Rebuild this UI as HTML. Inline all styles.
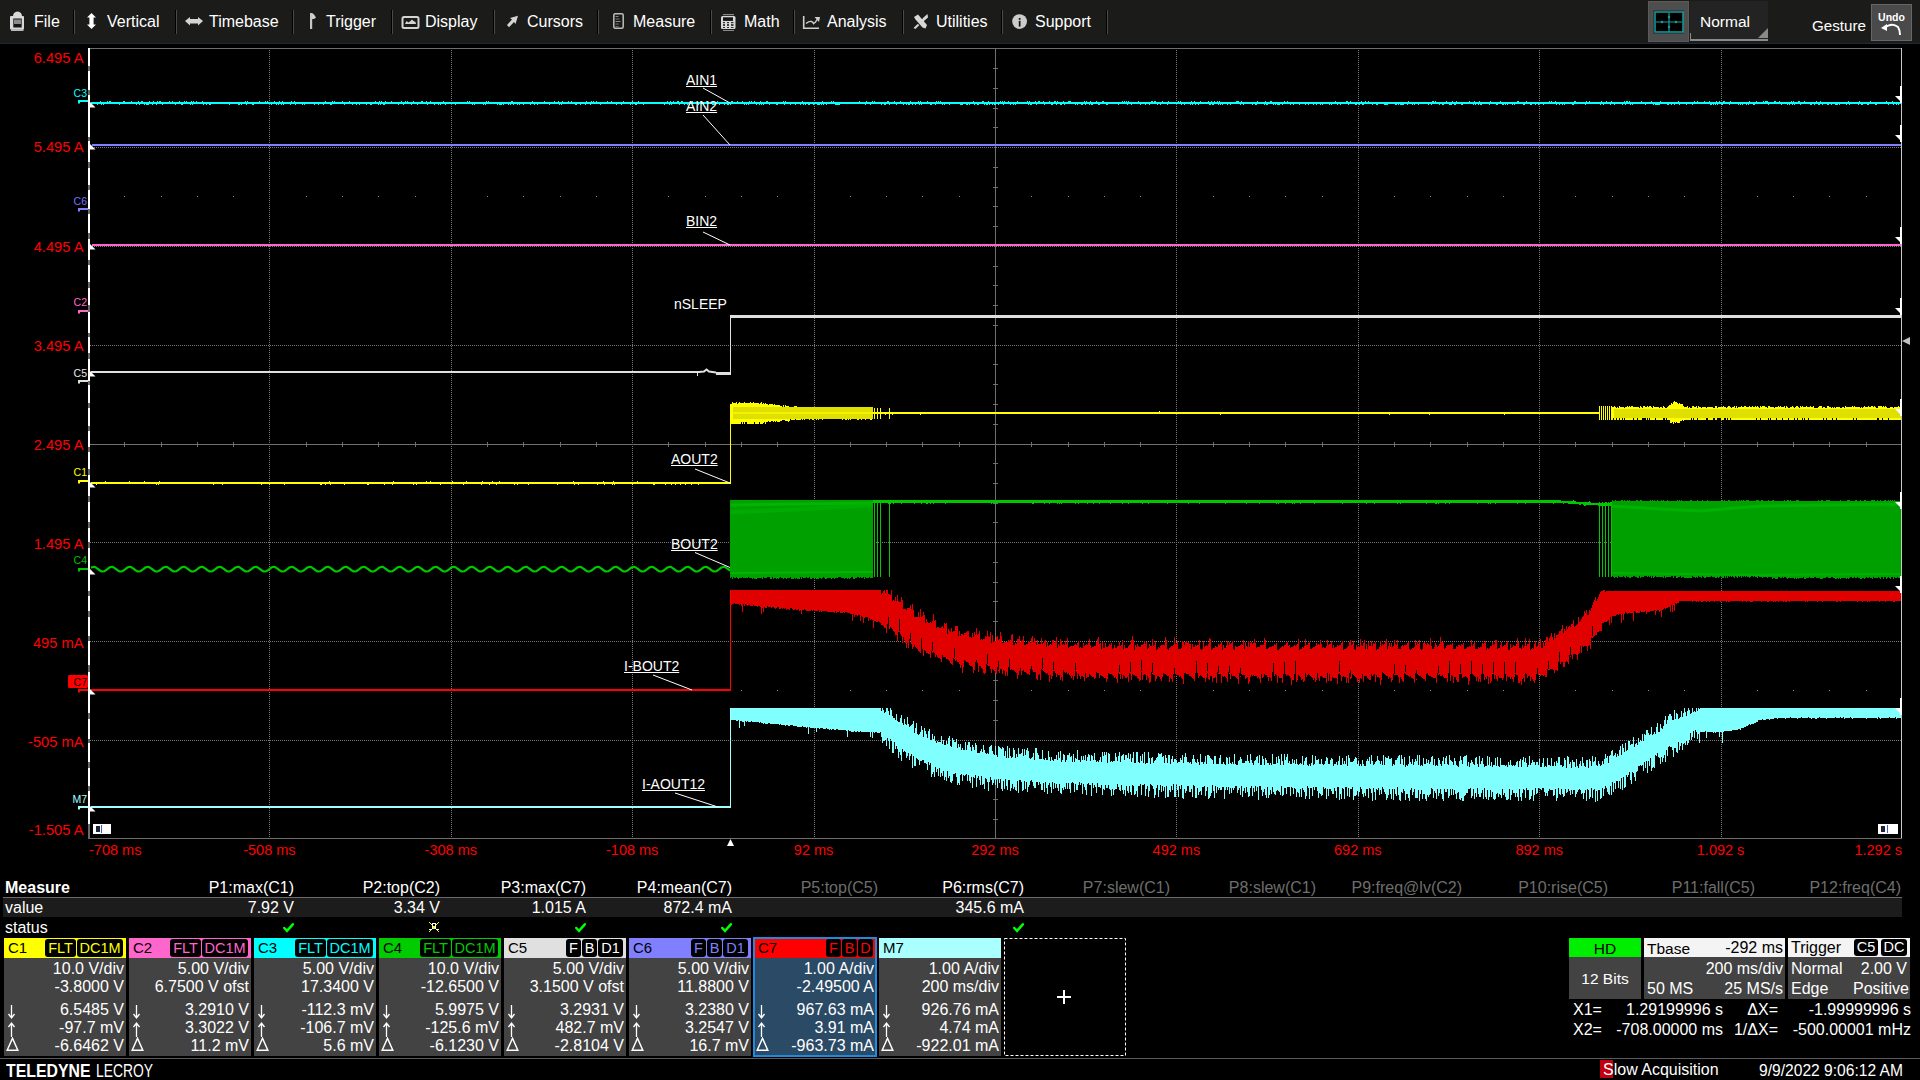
<!DOCTYPE html><html><head><meta charset="utf-8"><style>
*{margin:0;padding:0;box-sizing:border-box}
html,body{width:1920px;height:1080px;background:#000;overflow:hidden;position:relative;font-family:"Liberation Sans",sans-serif;color:#fff}
.a{position:absolute}
.t{position:absolute;white-space:nowrap}
.sep{position:absolute;top:10px;width:2px;height:24px;border-left:1px solid #000;border-right:1px solid #4a4a4a}
.tag{position:absolute;background:#000;border-radius:3px;text-align:center;white-space:nowrap}
</style></head><body><div class="a" style="left:0;top:0;width:1920px;height:43px;background:#1b1b19"></div><div class="a" style="left:0;top:43px;width:1920px;height:1px;background:#1c2a3a"></div><div class="t" style="left:34px;top:12.46px;font-size:16px;line-height:20px;color:#fff;">File</div><div class="t" style="left:107px;top:12.46px;font-size:16px;line-height:20px;color:#fff;">Vertical</div><div class="t" style="left:209px;top:12.46px;font-size:16px;line-height:20px;color:#fff;">Timebase</div><div class="t" style="left:326px;top:12.46px;font-size:16px;line-height:20px;color:#fff;">Trigger</div><div class="t" style="left:425px;top:12.46px;font-size:16px;line-height:20px;color:#fff;">Display</div><div class="t" style="left:527px;top:12.46px;font-size:16px;line-height:20px;color:#fff;">Cursors</div><div class="t" style="left:633px;top:12.46px;font-size:16px;line-height:20px;color:#fff;">Measure</div><div class="t" style="left:744px;top:12.46px;font-size:16px;line-height:20px;color:#fff;">Math</div><div class="t" style="left:827px;top:12.46px;font-size:16px;line-height:20px;color:#fff;">Analysis</div><div class="t" style="left:936px;top:12.46px;font-size:16px;line-height:20px;color:#fff;">Utilities</div><div class="t" style="left:1035px;top:12.46px;font-size:16px;line-height:20px;color:#fff;">Support</div><div class="sep" style="left:73px"></div><div class="sep" style="left:175px"></div><div class="sep" style="left:292px"></div><div class="sep" style="left:391px"></div><div class="sep" style="left:493px"></div><div class="sep" style="left:597px"></div><div class="sep" style="left:710px"></div><div class="sep" style="left:793px"></div><div class="sep" style="left:902px"></div><div class="sep" style="left:1001px"></div><div class="sep" style="left:1106px"></div><svg class="a" style="left:0;top:0" width="1110" height="43" viewBox="0 0 1110 43">
<g fill="#d8d8d8" stroke="none">
<!-- File clipboard -->
<rect x="10" y="16" width="14" height="13.5" rx="1"/>
<path d="M13 16.5 Q13 12 17.5 11.5 Q22 12 22 16.5Z"/>
<rect x="11" y="29" width="12.5" height="2" fill="#b8b8b8"/>
<rect x="13.3" y="18.5" width="8.4" height="9" fill="#151515"/>
<rect x="14" y="19.5" width="7" height="4.5" fill="#8a8a8a"/>
<!-- Vertical double arrow -->
<path d="M91.5 13 L96 17.5 L93.6 17.5 L93.6 24.5 L96 24.5 L91.5 29 L87 24.5 L89.4 24.5 L89.4 17.5 L87 17.5Z" fill="#fff"/>
<!-- Timebase double arrow -->
<path d="M185 21 L190 17 L190 19 L198 19 L198 17 L203 21 L198 25.5 L198 23.5 L190 23.5 L190 25.5Z" fill="#d4d4d4"/>
<!-- Trigger flag -->
<rect x="310" y="13" width="2.2" height="16" fill="#c8c8c8"/>
<path d="M312 13 L314 14.5 L316 17.5 L314 19 L312 19Z" fill="#d0d0d0"/>
<!-- Display -->
<rect x="402.5" y="17" width="16" height="11" rx="1.5" fill="none" stroke="#d4d4d4" stroke-width="2"/>
<path d="M405 24 L406.5 21 L408.5 22.5 L410.5 21 L412 19.5 L413.5 21 L415.5 22 L416 24Z" fill="#d4d4d4"/>
<!-- Cursors arrow -->
<path d="M518 15.8 L510 18 L512 19.5 L507 25 L509 27.2 L514 22 L515.5 24 Z" fill="#d4d4d4"/>
<!-- Measure -->
<rect x="613.8" y="13.7" width="9.4" height="14.5" rx="1.5" fill="none" stroke="#bdbdbd" stroke-width="1.5"/>
<rect x="615.5" y="16" width="3" height="1" fill="#888"/><rect x="615.5" y="18.5" width="4" height="1" fill="#777"/><rect x="615.5" y="21" width="5" height="1" fill="#888"/><rect x="615.5" y="23.5" width="3" height="1" fill="#777"/><rect x="615.5" y="26" width="3" height="1" fill="#666"/>
<!-- Math calculator -->
<rect x="721" y="16" width="14.5" height="13" rx="1.5"/>
<rect x="723" y="17.3" width="10" height="3.6" fill="#151515"/>
<rect x="723" y="22" width="2" height="1.2" fill="#333"/><rect x="727" y="22" width="2" height="1.2" fill="#333"/><rect x="731" y="22" width="2.5" height="1.2" fill="#333"/>
<rect x="723" y="24" width="2" height="2" fill="#444"/><rect x="727" y="24" width="2" height="2" fill="#444"/><rect x="731" y="24" width="2.5" height="2" fill="#444"/>
<rect x="723" y="27" width="2" height="1" fill="#333"/><rect x="727" y="27" width="2" height="1" fill="#333"/><rect x="731" y="27" width="2.5" height="1" fill="#333"/>
<rect x="723" y="14" width="11" height="1.2" fill="#888"/><rect x="723" y="30" width="11" height="1" fill="#888"/>
<!-- Analysis -->
<path d="M803.7 16 V28.3 H819" fill="none" stroke="#d0d0d0" stroke-width="1.6"/>
<path d="M806 23.5 Q809 21 811.5 21.5 Q813 22 813.5 23.5 L815.5 22 L818 18" fill="none" stroke="#d0d0d0" stroke-width="1.4"/>
<path d="M814.5 17 L820 17 L819 22Z" fill="#d0d0d0"/>
<!-- Utilities crossed tools -->
<path d="M914 17 L918 14.5 L927 25 L925.5 28.5 L922.5 27.5 L915.5 19.5Z" fill="#d8d8d8"/>
<path d="M913.5 28 L917.5 24 L919.5 25 L915.5 29Z" fill="#d0d0d0"/>
<path d="M920.5 21 L924 17 L927.5 14 L928 17.5 L925 20 L922.5 22.5Z" fill="#d8d8d8"/>
<!-- Support info -->
<circle cx="1019.6" cy="21.6" r="7.4" fill="#cccccc"/>
<rect x="1018.8" y="18" width="1.7" height="1.8" fill="#111"/>
<rect x="1018.8" y="20.8" width="1.7" height="5.8" fill="#111"/>
</g>
</svg>
<svg class="a" style="left:0;top:0" width="1920" height="1080" viewBox="0 0 1920 1080"><path d="M269.5 50V838M451.5 50V838M632.5 50V838M814.5 50V838M1176.5 50V838M1358.5 50V838M1539.5 50V838M1721.5 50V838M90 147.5H1901M90 246.5H1901M90 345.5H1901M90 542.5H1901M90 641.5H1901M90 740.5H1901" stroke="#787878" stroke-width="1" stroke-dasharray="1 1" shape-rendering="crispEdges"/><path d="M124 196.5h1M161 196.5h1M197 196.5h1M233 196.5h1M306 196.5h1M342 196.5h1M378 196.5h1M415 196.5h1M487 196.5h1M523 196.5h1M560 196.5h1M596 196.5h1M668 196.5h1M705 196.5h1M741 196.5h1M777 196.5h1M850 196.5h1M886 196.5h1M922 196.5h1M959 196.5h1M1031 196.5h1M1068 196.5h1M1104 196.5h1M1140 196.5h1M1213 196.5h1M1249 196.5h1M1285 196.5h1M1322 196.5h1M1394 196.5h1M1430 196.5h1M1467 196.5h1M1503 196.5h1M1575 196.5h1M1612 196.5h1M1648 196.5h1M1684 196.5h1M1757 196.5h1M1793 196.5h1M1829 196.5h1M1866 196.5h1M124 690.5h1M161 690.5h1M197 690.5h1M233 690.5h1M306 690.5h1M342 690.5h1M378 690.5h1M415 690.5h1M487 690.5h1M523 690.5h1M560 690.5h1M596 690.5h1M668 690.5h1M705 690.5h1M741 690.5h1M777 690.5h1M850 690.5h1M886 690.5h1M922 690.5h1M959 690.5h1M1031 690.5h1M1068 690.5h1M1104 690.5h1M1140 690.5h1M1213 690.5h1M1249 690.5h1M1285 690.5h1M1322 690.5h1M1394 690.5h1M1430 690.5h1M1467 690.5h1M1503 690.5h1M1575 690.5h1M1612 690.5h1M1648 690.5h1M1684 690.5h1M1757 690.5h1M1793 690.5h1M1829 690.5h1M1866 690.5h1" stroke="#8a8a8a" stroke-width="1" shape-rendering="crispEdges"/><path d="M995.5 49V838M90 444.5H1901" stroke="#707070" stroke-width="1" shape-rendering="crispEdges"/><path d="M993 68.5H998M993 88.5H998M993 108.5H998M993 127.5H998M993 167.5H998M993 187.5H998M993 206.5H998M993 226.5H998M993 266.5H998M993 285.5H998M993 305.5H998M993 325.5H998M993 364.5H998M993 384.5H998M993 404.5H998M993 424.5H998M993 463.5H998M993 483.5H998M993 503.5H998M993 522.5H998M993 562.5H998M993 582.5H998M993 601.5H998M993 621.5H998M993 661.5H998M993 680.5H998M993 700.5H998M993 720.5H998M993 759.5H998M993 779.5H998M993 799.5H998M993 819.5H998M124.5 442V447M161.5 442V447M197.5 442V447M233.5 442V447M306.5 442V447M342.5 442V447M378.5 442V447M415.5 442V447M487.5 442V447M523.5 442V447M560.5 442V447M596.5 442V447M668.5 442V447M705.5 442V447M741.5 442V447M777.5 442V447M850.5 442V447M886.5 442V447M922.5 442V447M959.5 442V447M1031.5 442V447M1068.5 442V447M1104.5 442V447M1140.5 442V447M1213.5 442V447M1249.5 442V447M1285.5 442V447M1322.5 442V447M1394.5 442V447M1430.5 442V447M1467.5 442V447M1503.5 442V447M1575.5 442V447M1612.5 442V447M1648.5 442V447M1684.5 442V447M1757.5 442V447M1793.5 442V447M1829.5 442V447M1866.5 442V447" stroke="#707070" stroke-width="1" shape-rendering="crispEdges"/><path d="M88 48.5H1902M88 838.5H1902" stroke="#6e6e6e" stroke-width="1" shape-rendering="crispEdges"/><path d="M89 48V838" stroke="#6a6a6a" stroke-width="2" shape-rendering="crispEdges"/><path d="M89 48V66M89 71V90M89 95V137M89 141V162M89 168V185M89 190V209M89 214V233M89 239V260M89 265V282M89 288V305M89 312V333M89 337V353M89 359V381M89 385V403M89 408V426M89 431V447M89 452V469M89 475V496M89 502V522M89 528V542M89 548V591M89 596V611M89 617V636M89 641V665M89 672V713M89 719V739M89 743V762M89 768V786M89 791V824" stroke="#fff" stroke-width="2" shape-rendering="crispEdges"/><path d="M1901.5 48V838" stroke="#c8c8c8" stroke-width="1" shape-rendering="crispEdges"/><rect x="91" y="102" width="1810" height="2" fill="#00ffff" shape-rendering="crispEdges" /><path d="M97.5 104V105M100.5 101V102M101.5 104V105M103.5 104V105M107.5 101V102M109.5 101V102M110.5 101V102M119.5 104V105M123.5 101V102M124.5 101V102M131.5 101V102M136.5 104V105M138.5 101V102M139.5 104V105M141.5 101V102M142.5 101V102M144.5 104V105M146.5 104V105M147.5 104V105M148.5 104V105M149.5 101V102M152.5 104V105M153.5 101V102M156.5 104V105M157.5 101V102M159.5 101V102M160.5 101V102M162.5 104V105M169.5 101V102M172.5 101V102M175.5 104V105M179.5 101V102M181.5 104V105M182.5 104V105M184.5 101V102M186.5 101V102M190.5 104V105M191.5 101V102M192.5 104V105M193.5 101V102M196.5 101V102M202.5 101V102M203.5 104V105M206.5 104V105M209.5 104V105M210.5 104V105M229.5 104V105M238.5 104V105M239.5 104V105M241.5 104V105M245.5 101V102M246.5 104V105M247.5 101V102M252.5 104V105M253.5 104V105M259.5 101V102M265.5 101V102M267.5 101V102M271.5 104V105M274.5 101V102M276.5 104V105M278.5 104V105M279.5 101V102M281.5 104V105M282.5 101V102M283.5 104V105M290.5 104V105M291.5 101V102M294.5 101V102M295.5 104V105M302.5 104V105M304.5 104V105M314.5 104V105M318.5 104V105M323.5 104V105M325.5 101V102M330.5 104V105M331.5 104V105M332.5 101V102M334.5 101V102M342.5 101V102M344.5 104V105M349.5 101V102M352.5 104V105M356.5 104V105M359.5 104V105M366.5 104V105M370.5 104V105M371.5 104V105M375.5 101V102M378.5 104V105M379.5 101V102M380.5 104V105M381.5 101V102M383.5 104V105M384.5 104V105M385.5 101V102M391.5 101V102M398.5 104V105M401.5 101V102M403.5 104V105M405.5 101V102M407.5 101V102M411.5 104V105M413.5 101V102M417.5 104V105M421.5 101V102M422.5 101V102M426.5 101V102M427.5 104V105M430.5 101V102M434.5 104V105M438.5 104V105M440.5 104V105M443.5 101V102M445.5 104V105M455.5 104V105M467.5 101V102M469.5 101V102M472.5 104V105M474.5 104V105M483.5 104V105M485.5 104V105M486.5 101V102M488.5 101V102M497.5 104V105M499.5 104V105M500.5 104V105M501.5 104V105M503.5 104V105M508.5 104V105M510.5 104V105M511.5 101V102M512.5 101V102M513.5 104V105M517.5 104V105M519.5 104V105M523.5 104V105M530.5 104V105M532.5 101V102M534.5 104V105M537.5 104V105M544.5 101V102M549.5 104V105M554.5 101V102M558.5 101V102M559.5 104V105M561.5 104V105M562.5 101V102M568.5 101V102M571.5 101V102M575.5 104V105M576.5 104V105M580.5 104V105M585.5 104V105M586.5 101V102M590.5 104V105M591.5 101V102M593.5 101V102M596.5 101V102M600.5 104V105M607.5 101V102M611.5 101V102M616.5 104V105M621.5 104V105M623.5 101V102M630.5 104V105M632.5 101V102M635.5 104V105M636.5 104V105M638.5 101V102M643.5 104V105M664.5 104V105M667.5 101V102M669.5 104V105M670.5 101V102M671.5 104V105M673.5 101V102M677.5 101V102M678.5 101V102M679.5 104V105M681.5 101V102M682.5 101V102M684.5 104V105M687.5 104V105M689.5 104V105M692.5 101V102M698.5 104V105M700.5 101V102M706.5 101V102M707.5 101V102M712.5 104V105M713.5 104V105M714.5 104V105M717.5 101V102M719.5 104V105M724.5 104V105M727.5 104V105M728.5 104V105M730.5 104V105M731.5 101V102M732.5 101V102M737.5 101V102M742.5 101V102M744.5 104V105M746.5 104V105M748.5 104V105M749.5 101V102M751.5 101V102M754.5 101V102M756.5 104V105M759.5 104V105M760.5 101V102M761.5 104V105M763.5 104V105M766.5 101V102M767.5 101V102M769.5 104V105M776.5 104V105M777.5 104V105M783.5 101V102M784.5 104V105M785.5 101V102M790.5 104V105M795.5 104V105M800.5 104V105M802.5 101V102M803.5 104V105M805.5 104V105M808.5 104V105M809.5 104V105M813.5 104V105M817.5 104V105M818.5 104V105M819.5 104V105M821.5 104V105M822.5 101V102M823.5 104V105M826.5 104V105M831.5 101V102M833.5 101V102M835.5 104V105M836.5 104V105M837.5 104V105M838.5 104V105M839.5 104V105M859.5 101V102M865.5 104V105M866.5 101V102M870.5 104V105M872.5 101V102M874.5 101V102M881.5 104V105M884.5 104V105M885.5 104V105M887.5 101V102M888.5 101V102M889.5 104V105M894.5 101V102M896.5 104V105M900.5 101V102M903.5 104V105M906.5 104V105M908.5 104V105M909.5 104V105M910.5 101V102M912.5 104V105M915.5 104V105M918.5 101V102M919.5 104V105M920.5 101V102M921.5 104V105M927.5 101V102M930.5 104V105M931.5 104V105M935.5 104V105M936.5 101V102M938.5 101V102M940.5 101V102M942.5 104V105M944.5 104V105M949.5 104V105M960.5 104V105M961.5 104V105M962.5 104V105M966.5 104V105M967.5 104V105M969.5 104V105M973.5 101V102M974.5 104V105M977.5 104V105M978.5 104V105M982.5 101V102M983.5 101V102M984.5 104V105M986.5 104V105M987.5 104V105M988.5 101V102M989.5 104V105M992.5 104V105M994.5 104V105M995.5 104V105M998.5 104V105M1000.5 101V102M1002.5 101V102M1003.5 104V105M1004.5 101V102M1008.5 101V102M1010.5 104V105M1013.5 104V105M1015.5 104V105M1017.5 101V102M1027.5 101V102M1028.5 104V105M1029.5 101V102M1030.5 104V105M1031.5 104V105M1035.5 101V102M1036.5 104V105M1038.5 101V102M1039.5 101V102M1043.5 101V102M1044.5 104V105M1049.5 101V102M1051.5 104V105M1052.5 104V105M1054.5 101V102M1055.5 101V102M1056.5 104V105M1057.5 101V102M1060.5 104V105M1061.5 104V105M1063.5 101V102M1064.5 104V105M1068.5 101V102M1069.5 101V102M1070.5 101V102M1075.5 104V105M1077.5 104V105M1081.5 104V105M1082.5 104V105M1084.5 101V102M1085.5 104V105M1086.5 101V102M1089.5 104V105M1090.5 101V102M1091.5 104V105M1092.5 104V105M1096.5 101V102M1098.5 104V105M1099.5 104V105M1102.5 101V102M1103.5 101V102M1106.5 104V105M1107.5 104V105M1118.5 104V105M1122.5 101V102M1124.5 101V102M1126.5 101V102M1127.5 104V105M1128.5 101V102M1131.5 104V105M1138.5 101V102M1140.5 104V105M1145.5 104V105M1149.5 104V105M1151.5 101V102M1152.5 101V102M1154.5 101V102M1155.5 101V102M1157.5 104V105M1160.5 104V105M1162.5 101V102M1167.5 104V105M1168.5 101V102M1178.5 101V102M1180.5 101V102M1181.5 104V105M1184.5 104V105M1190.5 104V105M1191.5 101V102M1192.5 104V105M1194.5 101V102M1195.5 104V105M1198.5 104V105M1200.5 101V102M1208.5 101V102M1209.5 104V105M1210.5 104V105M1211.5 101V102M1212.5 104V105M1213.5 104V105M1214.5 101V102M1217.5 101V102M1218.5 104V105M1219.5 101V102M1220.5 104V105M1222.5 104V105M1227.5 104V105M1230.5 104V105M1236.5 101V102M1237.5 101V102M1238.5 101V102M1240.5 104V105M1241.5 101V102M1243.5 104V105M1252.5 104V105M1255.5 104V105M1256.5 104V105M1257.5 101V102M1264.5 104V105M1265.5 101V102M1266.5 104V105M1267.5 104V105M1270.5 101V102M1271.5 101V102M1273.5 104V105M1275.5 104V105M1277.5 104V105M1278.5 104V105M1279.5 104V105M1282.5 104V105M1284.5 101V102M1287.5 101V102M1290.5 104V105M1293.5 104V105M1299.5 104V105M1305.5 104V105M1308.5 104V105M1313.5 104V105M1316.5 104V105M1320.5 104V105M1322.5 104V105M1329.5 104V105M1331.5 104V105M1335.5 101V102M1337.5 104V105M1340.5 104V105M1346.5 101V102M1347.5 101V102M1348.5 104V105M1350.5 101V102M1355.5 104V105M1356.5 104V105M1359.5 104V105M1361.5 101V102M1362.5 104V105M1363.5 104V105M1365.5 101V102M1368.5 101V102M1372.5 104V105M1376.5 104V105M1377.5 104V105M1384.5 104V105M1385.5 104V105M1386.5 104V105M1387.5 104V105M1395.5 104V105M1396.5 104V105M1398.5 104V105M1400.5 104V105M1401.5 104V105M1402.5 104V105M1403.5 104V105M1407.5 104V105M1408.5 101V102M1412.5 104V105M1414.5 104V105M1418.5 104V105M1428.5 104V105M1431.5 104V105M1432.5 101V102M1433.5 101V102M1435.5 101V102M1439.5 104V105M1442.5 104V105M1443.5 104V105M1446.5 101V102M1449.5 104V105M1450.5 104V105M1451.5 104V105M1452.5 101V102M1454.5 104V105M1455.5 104V105M1456.5 101V102M1461.5 104V105M1462.5 104V105M1469.5 101V102M1473.5 104V105M1474.5 101V102M1475.5 104V105M1478.5 104V105M1479.5 101V102M1480.5 104V105M1481.5 104V105M1489.5 104V105M1490.5 101V102M1496.5 104V105M1497.5 104V105M1500.5 101V102M1502.5 104V105M1503.5 104V105M1505.5 104V105M1507.5 104V105M1512.5 104V105M1514.5 104V105M1517.5 101V102M1518.5 101V102M1523.5 104V105M1524.5 104V105M1526.5 101V102M1530.5 104V105M1531.5 104V105M1535.5 104V105M1538.5 104V105M1543.5 104V105M1549.5 101V102M1551.5 101V102M1555.5 101V102M1556.5 104V105M1559.5 104V105M1562.5 104V105M1564.5 104V105M1572.5 104V105M1573.5 104V105M1574.5 101V102M1575.5 101V102M1585.5 104V105M1586.5 101V102M1589.5 101V102M1600.5 104V105M1601.5 101V102M1603.5 104V105M1606.5 101V102M1610.5 104V105M1611.5 101V102M1614.5 104V105M1622.5 104V105M1624.5 101V102M1625.5 104V105M1626.5 101V102M1627.5 101V102M1629.5 101V102M1630.5 104V105M1632.5 104V105M1641.5 101V102M1645.5 104V105M1651.5 101V102M1653.5 104V105M1655.5 104V105M1656.5 104V105M1657.5 104V105M1658.5 104V105M1659.5 104V105M1660.5 101V102M1667.5 104V105M1668.5 104V105M1671.5 104V105M1674.5 104V105M1678.5 101V102M1679.5 104V105M1686.5 104V105M1692.5 104V105M1694.5 101V102M1697.5 101V102M1704.5 101V102M1709.5 101V102M1710.5 104V105M1711.5 104V105M1713.5 104V105M1715.5 104V105M1716.5 101V102M1717.5 104V105M1719.5 101V102M1721.5 104V105M1722.5 104V105M1723.5 101V102M1724.5 101V102M1729.5 104V105M1730.5 101V102M1738.5 104V105M1740.5 104V105M1742.5 104V105M1746.5 104V105M1748.5 104V105M1749.5 101V102M1753.5 104V105M1754.5 104V105M1756.5 101V102M1763.5 101V102M1765.5 101V102M1766.5 101V102M1767.5 101V102M1768.5 104V105M1774.5 101V102M1775.5 101V102M1779.5 101V102M1781.5 104V105M1787.5 104V105M1789.5 104V105M1791.5 101V102M1792.5 104V105M1793.5 101V102M1794.5 104V105M1798.5 101V102M1799.5 101V102M1800.5 104V105M1804.5 101V102M1810.5 104V105M1811.5 104V105M1814.5 104V105M1816.5 101V102M1818.5 104V105M1819.5 104V105M1820.5 101V102M1822.5 104V105M1827.5 104V105M1828.5 104V105M1831.5 104V105M1835.5 104V105M1836.5 104V105M1837.5 104V105M1839.5 104V105M1846.5 104V105M1848.5 101V102M1849.5 104V105M1858.5 104V105M1859.5 101V102M1861.5 104V105M1862.5 104V105M1867.5 104V105M1868.5 104V105M1870.5 101V102M1875.5 104V105M1876.5 104V105M1886.5 101V102M1888.5 104V105M1892.5 101V102M1893.5 104V105M1896.5 104V105M1898.5 104V105" stroke="#00ffff" stroke-width="1" shape-rendering="crispEdges"/><rect x="92" y="144" width="1809" height="2" fill="#8080ff" shape-rendering="crispEdges" /><rect x="92" y="244" width="1809" height="2" fill="#ff66cc" shape-rendering="crispEdges" /><rect x="91" y="371" width="606" height="2" fill="#e0e0e0" shape-rendering="crispEdges" /><path d="M697 372 L699 372 L704 371.5 L706.5 369.5 L709 371.5 L716 372.5" stroke="#e0e0e0" stroke-width="2" fill="none"/><rect x="697" y="372" width="1" height="4" fill="#e0e0e0" shape-rendering="crispEdges" /><rect x="716" y="372" width="15" height="3" fill="#e0e0e0" shape-rendering="crispEdges" /><rect x="730" y="316" width="1" height="59" fill="#e0e0e0" shape-rendering="crispEdges" /><rect x="730" y="315" width="1171" height="3" fill="#e0e0e0" shape-rendering="crispEdges" /><rect x="91" y="482" width="639" height="2" fill="#ffff00" shape-rendering="crispEdges" /><path d="M96.5 484V485M105.5 481V482M129.5 481V482M144.5 481V482M156.5 484V485M158.5 484V485M159.5 481V482M213.5 484V485M222.5 484V485M261.5 484V485M269.5 484V485M284.5 484V485M320.5 484V485M321.5 484V485M325.5 484V485M329.5 481V482M330.5 484V485M344.5 484V485M367.5 484V485M368.5 484V485M384.5 484V485M392.5 484V485M393.5 481V482M413.5 484V485M416.5 484V485M426.5 481V482M430.5 481V482M440.5 484V485M452.5 481V482M463.5 484V485M466.5 481V482M481.5 484V485M482.5 481V482M489.5 484V485M492.5 481V482M496.5 484V485M499.5 481V482M514.5 484V485M517.5 484V485M528.5 484V485M557.5 484V485M573.5 481V482M574.5 484V485M578.5 484V485M597.5 484V485M603.5 481V482M604.5 484V485M612.5 484V485M613.5 481V482M614.5 484V485M632.5 484V485M637.5 481V482M653.5 484V485M654.5 484V485M665.5 484V485M671.5 484V485M675.5 484V485M680.5 484V485M685.5 484V485M691.5 484V485M698.5 484V485" stroke="#ffff00" stroke-width="1" shape-rendering="crispEdges"/><rect x="730" y="404" width="1" height="80" fill="#ffff00" shape-rendering="crispEdges" /><path d="M731.5 404V424M732.5 402V424M733.5 403V424M734.5 403V424M735.5 403V424M736.5 402V424M737.5 404V424M738.5 403V424M739.5 402V424M740.5 403V424M741.5 403V422M742.5 403V424M743.5 403V422M744.5 402V424M745.5 403V422M746.5 403V422M747.5 403V424M748.5 403V424M749.5 403V424M750.5 402V424M751.5 403V424M752.5 403V424M753.5 402V424M754.5 403V422M755.5 403V424M756.5 403V424M757.5 403V424M758.5 403V424M759.5 404V422M760.5 403V424M761.5 402V424M762.5 404V424M763.5 403V423M764.5 404V422M765.5 403V424M766.5 404V422M767.5 404V422M768.5 405V421M769.5 404V422M770.5 404V422M771.5 404V421M772.5 404V421M773.5 405V422M774.5 404V421M775.5 405V422M776.5 405V421M777.5 405V422M778.5 405V422M779.5 405V422M780.5 406V421M781.5 406V421M782.5 407V420M783.5 405V420M784.5 407V420M785.5 405V421M786.5 406V421M787.5 406V421M788.5 406V422M789.5 407V421M790.5 407V419M791.5 408V420M792.5 408V420M793.5 407V420M794.5 406V420M795.5 406V419M796.5 406V420M797.5 408V420M798.5 408V420M799.5 409V420M800.5 407V420M801.5 409V419M802.5 407V420M803.5 408V419M804.5 408V420M805.5 408V418M806.5 408V418M807.5 408V418M808.5 409V418M809.5 409V420M810.5 408V419M811.5 407V419M812.5 407V420M813.5 408V420M814.5 409V419M815.5 408V419M816.5 408V420M817.5 408V419M818.5 408V420M819.5 408V419M820.5 408V419M821.5 408V418M822.5 408V420M823.5 407V419M824.5 407V419M825.5 407V418M826.5 408V418M827.5 408V419M828.5 408V418M829.5 407V418M830.5 408V419M831.5 409V419M832.5 407V419M833.5 408V419M834.5 408V419M835.5 408V419M836.5 408V419M837.5 408V419M838.5 409V418M839.5 407V419M840.5 408V419M841.5 408V419M842.5 408V420M843.5 408V419M844.5 408V419M845.5 408V420M846.5 408V420M847.5 408V419M848.5 408V420M849.5 407V419M850.5 408V420M851.5 408V419M852.5 408V419M853.5 409V419M854.5 409V419M855.5 408V419M856.5 408V419M857.5 408V420M858.5 408V420M859.5 408V418M860.5 408V419M861.5 408V420M862.5 409V419M863.5 408V419M864.5 408V419M865.5 407V420M866.5 408V418M867.5 407V419M868.5 407V419M869.5 407V418M870.5 408V420M871.5 408V420M872.5 408V419" stroke="#ffff00" stroke-width="1" fill="none" shape-rendering="crispEdges" /><rect x="733" y="407" width="140" height="12" fill="#e0e000" shape-rendering="crispEdges" /><rect x="731" y="412" width="142" height="2" fill="#ffff00" shape-rendering="crispEdges" opacity="0.6"/><rect x="874" y="408" width="1" height="11" fill="#ffff00" shape-rendering="crispEdges" /><rect x="877" y="408" width="1" height="11" fill="#ffff00" shape-rendering="crispEdges" /><rect x="880" y="408" width="1" height="11" fill="#ffff00" shape-rendering="crispEdges" /><rect x="889" y="408" width="1" height="11" fill="#ffff00" shape-rendering="crispEdges" /><rect x="873" y="412" width="726" height="2" fill="#ffff00" shape-rendering="crispEdges" /><path d="M885.5 414V415M892.5 414V415M920.5 414V415M1159.5 411V412M1220.5 414V415M1389.5 414V415M1429.5 414V415M1504.5 414V415" stroke="#ffff00" stroke-width="1" shape-rendering="crispEdges"/><rect x="1599" y="406" width="1" height="14" fill="#ffff00" shape-rendering="crispEdges" /><rect x="1601" y="406" width="1" height="14" fill="#ffff00" shape-rendering="crispEdges" /><rect x="1603" y="406" width="1" height="14" fill="#ffff00" shape-rendering="crispEdges" /><rect x="1605" y="406" width="1" height="14" fill="#ffff00" shape-rendering="crispEdges" /><rect x="1607" y="406" width="1" height="14" fill="#ffff00" shape-rendering="crispEdges" /><rect x="1609" y="406" width="1" height="14" fill="#ffff00" shape-rendering="crispEdges" /><rect x="1611" y="406" width="1" height="14" fill="#ffff00" shape-rendering="crispEdges" /><path d="M1612.5 407V420M1613.5 407V418M1614.5 406V420M1615.5 407V420M1616.5 408V418M1617.5 407V420M1618.5 408V420M1619.5 406V418M1620.5 407V420M1621.5 407V420M1622.5 407V418M1623.5 407V420M1624.5 408V418M1625.5 407V420M1626.5 407V420M1627.5 406V420M1628.5 407V420M1629.5 406V420M1630.5 407V420M1631.5 406V420M1632.5 406V420M1633.5 407V418M1634.5 407V420M1635.5 407V420M1636.5 407V420M1637.5 407V418M1638.5 407V420M1639.5 408V420M1640.5 406V420M1641.5 407V420M1642.5 408V418M1643.5 406V418M1644.5 406V418M1645.5 407V418M1646.5 407V420M1647.5 406V418M1648.5 407V420M1649.5 406V418M1650.5 406V420M1651.5 407V420M1652.5 408V420M1653.5 406V420M1654.5 407V420M1655.5 407V418M1656.5 407V420M1657.5 407V420M1658.5 407V420M1659.5 408V420M1660.5 407V420M1661.5 407V420M1662.5 408V420M1663.5 406V418M1664.5 407V418M1665.5 408V420M1666.5 408V418M1667.5 407V420M1668.5 406V420M1669.5 405V420M1670.5 405V423M1671.5 403V423M1672.5 404V422M1673.5 402V424M1674.5 401V422M1675.5 402V423M1676.5 402V422M1677.5 403V423M1678.5 404V423M1679.5 403V423M1680.5 404V421M1681.5 404V421M1682.5 404V420M1683.5 406V421M1684.5 407V420M1685.5 407V420M1686.5 407V420M1687.5 406V420M1688.5 408V420M1689.5 407V420M1690.5 408V420M1691.5 408V418M1692.5 406V420M1693.5 406V418M1694.5 407V420M1695.5 407V420M1696.5 406V420M1697.5 408V418M1698.5 406V420M1699.5 407V420M1700.5 407V420M1701.5 408V420M1702.5 407V420M1703.5 407V420M1704.5 407V420M1705.5 407V420M1706.5 408V418M1707.5 407V418M1708.5 407V420M1709.5 407V420M1710.5 407V420M1711.5 407V420M1712.5 407V420M1713.5 408V418M1714.5 408V418M1715.5 406V420M1716.5 406V420M1717.5 408V418M1718.5 407V418M1719.5 407V418M1720.5 407V418M1721.5 407V420M1722.5 407V420M1723.5 406V420M1724.5 407V418M1725.5 407V418M1726.5 408V420M1727.5 407V418M1728.5 406V420M1729.5 406V420M1730.5 407V418M1731.5 408V420M1732.5 407V420M1733.5 407V420M1734.5 406V420M1735.5 408V420M1736.5 406V420M1737.5 408V420M1738.5 407V420M1739.5 407V420M1740.5 407V420M1741.5 406V420M1742.5 407V420M1743.5 407V420M1744.5 406V420M1745.5 406V420M1746.5 407V420M1747.5 407V420M1748.5 407V420M1749.5 406V420M1750.5 407V420M1751.5 407V420M1752.5 406V420M1753.5 407V420M1754.5 407V420M1755.5 406V420M1756.5 407V418M1757.5 406V420M1758.5 407V420M1759.5 408V420M1760.5 406V418M1761.5 407V420M1762.5 406V420M1763.5 406V420M1764.5 406V420M1765.5 407V420M1766.5 407V420M1767.5 408V420M1768.5 406V418M1769.5 406V420M1770.5 407V418M1771.5 407V420M1772.5 407V420M1773.5 407V420M1774.5 408V420M1775.5 407V420M1776.5 407V418M1777.5 407V420M1778.5 406V420M1779.5 407V420M1780.5 406V420M1781.5 407V420M1782.5 407V418M1783.5 407V420M1784.5 406V420M1785.5 408V420M1786.5 406V420M1787.5 407V420M1788.5 408V418M1789.5 408V420M1790.5 407V420M1791.5 407V420M1792.5 406V420M1793.5 407V420M1794.5 408V418M1795.5 407V420M1796.5 406V420M1797.5 406V418M1798.5 407V420M1799.5 408V420M1800.5 406V420M1801.5 407V420M1802.5 406V418M1803.5 407V420M1804.5 407V418M1805.5 407V420M1806.5 406V420M1807.5 407V420M1808.5 407V418M1809.5 407V420M1810.5 406V420M1811.5 407V420M1812.5 407V420M1813.5 406V420M1814.5 408V420M1815.5 408V420M1816.5 408V420M1817.5 408V420M1818.5 407V420M1819.5 406V420M1820.5 406V420M1821.5 406V420M1822.5 408V420M1823.5 407V418M1824.5 407V420M1825.5 408V420M1826.5 408V418M1827.5 406V420M1828.5 406V420M1829.5 407V420M1830.5 407V420M1831.5 408V420M1832.5 407V418M1833.5 408V420M1834.5 407V420M1835.5 408V420M1836.5 407V418M1837.5 407V420M1838.5 407V420M1839.5 407V420M1840.5 408V420M1841.5 408V420M1842.5 407V420M1843.5 407V420M1844.5 408V420M1845.5 406V420M1846.5 407V420M1847.5 407V420M1848.5 407V420M1849.5 407V420M1850.5 407V420M1851.5 407V420M1852.5 406V420M1853.5 407V418M1854.5 406V420M1855.5 407V420M1856.5 407V418M1857.5 407V420M1858.5 407V420M1859.5 407V420M1860.5 408V420M1861.5 407V420M1862.5 408V420M1863.5 407V420M1864.5 406V420M1865.5 407V420M1866.5 407V420M1867.5 407V420M1868.5 406V420M1869.5 407V420M1870.5 407V420M1871.5 406V420M1872.5 406V420M1873.5 407V420M1874.5 406V420M1875.5 407V420M1876.5 408V420M1877.5 408V418M1878.5 406V418M1879.5 406V420M1880.5 406V420M1881.5 406V420M1882.5 407V418M1883.5 406V420M1884.5 407V420M1885.5 406V420M1886.5 407V420M1887.5 408V420M1888.5 408V418M1889.5 408V420M1890.5 407V420M1891.5 407V420M1892.5 407V420M1893.5 408V420M1894.5 407V420M1895.5 407V420M1896.5 407V420M1897.5 407V420M1898.5 406V420M1899.5 407V420M1900.5 406V420" stroke="#ffff00" stroke-width="1" fill="none" shape-rendering="crispEdges" /><rect x="1614" y="409" width="287" height="9" fill="#e0e000" shape-rendering="crispEdges" /><polyline points="91,567.8 92,567.3 93,567.0 94,566.9 95,567.1 96,567.6 97,568.3 98,569.0 99,569.8 100,570.6 101,571.1 102,571.4 103,571.5 104,571.3 105,570.8 106,570.1 107,569.4 108,568.6 109,567.8 110,567.3 111,567.0 112,566.9 113,567.1 114,567.6 115,568.3 116,569.0 117,569.8 118,570.6 119,571.1 120,571.4 121,571.5 122,571.3 123,570.8 124,570.1 125,569.4 126,568.6 127,567.8 128,567.3 129,567.0 130,566.9 131,567.1 132,567.6 133,568.3 134,569.0 135,569.8 136,570.6 137,571.1 138,571.4 139,571.5 140,571.3 141,570.8 142,570.1 143,569.4 144,568.6 145,567.8 146,567.3 147,567.0 148,566.9 149,567.1 150,567.6 151,568.3 152,569.0 153,569.8 154,570.6 155,571.1 156,571.4 157,571.5 158,571.3 159,570.8 160,570.1 161,569.4 162,568.6 163,567.8 164,567.3 165,567.0 166,566.9 167,567.1 168,567.6 169,568.3 170,569.0 171,569.8 172,570.6 173,571.1 174,571.4 175,571.5 176,571.3 177,570.8 178,570.1 179,569.4 180,568.6 181,567.8 182,567.3 183,567.0 184,566.9 185,567.1 186,567.6 187,568.3 188,569.0 189,569.8 190,570.6 191,571.1 192,571.4 193,571.5 194,571.3 195,570.8 196,570.1 197,569.4 198,568.6 199,567.8 200,567.3 201,567.0 202,566.9 203,567.1 204,567.6 205,568.3 206,569.0 207,569.8 208,570.6 209,571.1 210,571.4 211,571.5 212,571.3 213,570.8 214,570.1 215,569.4 216,568.6 217,567.8 218,567.3 219,567.0 220,566.9 221,567.1 222,567.6 223,568.3 224,569.0 225,569.8 226,570.6 227,571.1 228,571.4 229,571.5 230,571.3 231,570.8 232,570.1 233,569.4 234,568.6 235,567.8 236,567.3 237,567.0 238,566.9 239,567.1 240,567.6 241,568.3 242,569.0 243,569.8 244,570.6 245,571.1 246,571.4 247,571.5 248,571.3 249,570.8 250,570.1 251,569.4 252,568.6 253,567.8 254,567.3 255,567.0 256,566.9 257,567.1 258,567.6 259,568.3 260,569.0 261,569.8 262,570.6 263,571.1 264,571.4 265,571.5 266,571.3 267,570.8 268,570.1 269,569.4 270,568.6 271,567.8 272,567.3 273,567.0 274,566.9 275,567.1 276,567.6 277,568.3 278,569.0 279,569.8 280,570.6 281,571.1 282,571.4 283,571.5 284,571.3 285,570.8 286,570.1 287,569.4 288,568.6 289,567.8 290,567.3 291,567.0 292,566.9 293,567.1 294,567.6 295,568.3 296,569.0 297,569.8 298,570.6 299,571.1 300,571.4 301,571.5 302,571.3 303,570.8 304,570.1 305,569.4 306,568.6 307,567.8 308,567.3 309,567.0 310,566.9 311,567.1 312,567.6 313,568.3 314,569.0 315,569.8 316,570.6 317,571.1 318,571.4 319,571.5 320,571.3 321,570.8 322,570.1 323,569.4 324,568.6 325,567.8 326,567.3 327,567.0 328,566.9 329,567.1 330,567.6 331,568.3 332,569.0 333,569.8 334,570.6 335,571.1 336,571.4 337,571.5 338,571.3 339,570.8 340,570.1 341,569.4 342,568.6 343,567.8 344,567.3 345,567.0 346,566.9 347,567.1 348,567.6 349,568.3 350,569.0 351,569.8 352,570.6 353,571.1 354,571.4 355,571.5 356,571.3 357,570.8 358,570.1 359,569.4 360,568.6 361,567.8 362,567.3 363,567.0 364,566.9 365,567.1 366,567.6 367,568.3 368,569.0 369,569.8 370,570.6 371,571.1 372,571.4 373,571.5 374,571.3 375,570.8 376,570.1 377,569.4 378,568.6 379,567.8 380,567.3 381,567.0 382,566.9 383,567.1 384,567.6 385,568.3 386,569.0 387,569.8 388,570.6 389,571.1 390,571.4 391,571.5 392,571.3 393,570.8 394,570.1 395,569.4 396,568.6 397,567.8 398,567.3 399,567.0 400,566.9 401,567.1 402,567.6 403,568.3 404,569.0 405,569.8 406,570.6 407,571.1 408,571.4 409,571.5 410,571.3 411,570.8 412,570.1 413,569.4 414,568.6 415,567.8 416,567.3 417,567.0 418,566.9 419,567.1 420,567.6 421,568.3 422,569.0 423,569.8 424,570.6 425,571.1 426,571.4 427,571.5 428,571.3 429,570.8 430,570.1 431,569.4 432,568.6 433,567.8 434,567.3 435,567.0 436,566.9 437,567.1 438,567.6 439,568.3 440,569.0 441,569.8 442,570.6 443,571.1 444,571.4 445,571.5 446,571.3 447,570.8 448,570.1 449,569.4 450,568.6 451,567.8 452,567.3 453,567.0 454,566.9 455,567.1 456,567.6 457,568.3 458,569.0 459,569.8 460,570.6 461,571.1 462,571.4 463,571.5 464,571.3 465,570.8 466,570.1 467,569.4 468,568.6 469,567.8 470,567.3 471,567.0 472,566.9 473,567.1 474,567.6 475,568.3 476,569.0 477,569.8 478,570.6 479,571.1 480,571.4 481,571.5 482,571.3 483,570.8 484,570.1 485,569.4 486,568.6 487,567.8 488,567.3 489,567.0 490,566.9 491,567.1 492,567.6 493,568.3 494,569.0 495,569.8 496,570.6 497,571.1 498,571.4 499,571.5 500,571.3 501,570.8 502,570.1 503,569.4 504,568.6 505,567.8 506,567.3 507,567.0 508,566.9 509,567.1 510,567.6 511,568.3 512,569.0 513,569.8 514,570.6 515,571.1 516,571.4 517,571.5 518,571.3 519,570.8 520,570.1 521,569.4 522,568.6 523,567.8 524,567.3 525,567.0 526,566.9 527,567.1 528,567.6 529,568.3 530,569.0 531,569.8 532,570.6 533,571.1 534,571.4 535,571.5 536,571.3 537,570.8 538,570.1 539,569.4 540,568.6 541,567.8 542,567.3 543,567.0 544,566.9 545,567.1 546,567.6 547,568.3 548,569.0 549,569.8 550,570.6 551,571.1 552,571.4 553,571.5 554,571.3 555,570.8 556,570.1 557,569.4 558,568.6 559,567.8 560,567.3 561,567.0 562,566.9 563,567.1 564,567.6 565,568.3 566,569.0 567,569.8 568,570.6 569,571.1 570,571.4 571,571.5 572,571.3 573,570.8 574,570.1 575,569.4 576,568.6 577,567.8 578,567.3 579,567.0 580,566.9 581,567.1 582,567.6 583,568.3 584,569.0 585,569.8 586,570.6 587,571.1 588,571.4 589,571.5 590,571.3 591,570.8 592,570.1 593,569.4 594,568.6 595,567.8 596,567.3 597,567.0 598,566.9 599,567.1 600,567.6 601,568.3 602,569.0 603,569.8 604,570.6 605,571.1 606,571.4 607,571.5 608,571.3 609,570.8 610,570.1 611,569.4 612,568.6 613,567.8 614,567.3 615,567.0 616,566.9 617,567.1 618,567.6 619,568.3 620,569.0 621,569.8 622,570.6 623,571.1 624,571.4 625,571.5 626,571.3 627,570.8 628,570.1 629,569.4 630,568.6 631,567.8 632,567.3 633,567.0 634,566.9 635,567.1 636,567.6 637,568.3 638,569.0 639,569.8 640,570.6 641,571.1 642,571.4 643,571.5 644,571.3 645,570.8 646,570.1 647,569.4 648,568.6 649,567.8 650,567.3 651,567.0 652,566.9 653,567.1 654,567.6 655,568.3 656,569.0 657,569.8 658,570.6 659,571.1 660,571.4 661,571.5 662,571.3 663,570.8 664,570.1 665,569.4 666,568.6 667,567.8 668,567.3 669,567.0 670,566.9 671,567.1 672,567.6 673,568.3 674,569.0 675,569.8 676,570.6 677,571.1 678,571.4 679,571.5 680,571.3 681,570.8 682,570.1 683,569.4 684,568.6 685,567.8 686,567.3 687,567.0 688,566.9 689,567.1 690,567.6 691,568.3 692,569.0 693,569.8 694,570.6 695,571.1 696,571.4 697,571.5 698,571.3 699,570.8 700,570.1 701,569.4 702,568.6 703,567.8 704,567.3 705,567.0 706,566.9 707,567.1 708,567.6 709,568.3 710,569.0 711,569.8 712,570.6 713,571.1 714,571.4 715,571.5 716,571.3 717,570.8 718,570.1 719,569.4 720,568.6 721,567.8 722,567.3 723,567.0 724,566.9 725,567.1 726,567.6 727,568.3 728,569.0 729,569.8 730,570.6" stroke="#00c800" stroke-width="2.2" fill="none"/><path d="M730.5 500V578M731.5 500V577M732.5 500V579M733.5 500V577M734.5 500V578M735.5 500V578M736.5 500V577M737.5 500V578M738.5 500V579M739.5 500V578M740.5 500V578M741.5 500V578M742.5 500V577M743.5 500V578M744.5 500V578M745.5 500V578M746.5 500V578M747.5 500V578M748.5 500V577M749.5 500V578M750.5 500V578M751.5 500V578M752.5 500V579M753.5 500V578M754.5 500V579M755.5 500V579M756.5 500V579M757.5 500V578M758.5 500V578M759.5 500V578M760.5 500V578M761.5 500V578M762.5 500V579M763.5 500V577M764.5 500V578M765.5 500V578M766.5 500V578M767.5 500V577M768.5 500V577M769.5 500V577M770.5 500V579M771.5 500V579M772.5 500V577M773.5 500V579M774.5 500V578M775.5 500V578M776.5 500V579M777.5 500V578M778.5 500V579M779.5 500V578M780.5 500V577M781.5 500V578M782.5 500V578M783.5 500V579M784.5 500V578M785.5 500V578M786.5 500V579M787.5 500V578M788.5 500V578M789.5 500V578M790.5 500V577M791.5 500V579M792.5 500V579M793.5 500V579M794.5 500V578M795.5 500V579M796.5 500V578M797.5 500V579M798.5 500V579M799.5 500V579M800.5 500V577M801.5 500V579M802.5 500V577M803.5 500V578M804.5 500V578M805.5 500V578M806.5 500V577M807.5 500V578M808.5 500V578M809.5 500V577M810.5 500V579M811.5 500V579M812.5 500V578M813.5 500V578M814.5 500V578M815.5 500V578M816.5 500V579M817.5 500V579M818.5 500V579M819.5 500V578M820.5 500V578M821.5 500V579M822.5 500V578M823.5 500V577M824.5 500V578M825.5 500V579M826.5 500V579M827.5 500V578M828.5 500V578M829.5 500V578M830.5 500V578M831.5 500V579M832.5 500V578M833.5 500V578M834.5 500V579M835.5 500V578M836.5 500V578M837.5 500V578M838.5 500V577M839.5 500V577M840.5 500V577M841.5 500V578M842.5 500V578M843.5 500V578M844.5 500V579M845.5 500V578M846.5 500V578M847.5 500V579M848.5 500V578M849.5 500V579M850.5 500V578M851.5 500V577M852.5 500V577M853.5 500V579M854.5 500V579M855.5 500V578M856.5 500V578M857.5 500V577M858.5 500V577M859.5 500V578M860.5 500V577M861.5 500V578M862.5 500V578M863.5 500V577M864.5 500V579M865.5 500V577M866.5 500V578M867.5 500V578M868.5 500V578M869.5 500V577M870.5 500V578M871.5 500V578M872.5 500V578" stroke="#00a000" stroke-width="1" fill="none" shape-rendering="crispEdges" /><path d="M731 505 L873 503" stroke="#00b800" stroke-width="3" fill="none" opacity="0.9"/><path d="M731 512 Q 800 510 873 505" stroke="#00b400" stroke-width="4" fill="none" opacity="0.6"/><path d="M731 573 L873 572" stroke="#00c000" stroke-width="2" fill="none" opacity="0.7"/><rect x="874" y="501" width="1" height="76" fill="#00c800" shape-rendering="crispEdges" /><rect x="877" y="501" width="1" height="76" fill="#00c800" shape-rendering="crispEdges" /><rect x="880" y="501" width="1" height="76" fill="#00c800" shape-rendering="crispEdges" /><rect x="889" y="501" width="1" height="76" fill="#00c800" shape-rendering="crispEdges" /><path d="M873.5 500V503M874.5 500V504M875.5 500V503M876.5 500V503M877.5 500V503M878.5 500V503M879.5 500V503M880.5 500V503M881.5 500V503M882.5 500V503M883.5 500V503M884.5 500V503M885.5 500V503M886.5 500V503M887.5 500V503M888.5 500V504M889.5 500V503M890.5 500V504M891.5 500V503M892.5 500V503M893.5 500V504M894.5 500V503M895.5 500V503M896.5 500V503M897.5 500V503M898.5 500V503M899.5 500V503M900.5 500V503M901.5 500V504M902.5 500V503M903.5 500V503M904.5 500V503M905.5 500V503M906.5 500V503M907.5 500V503M908.5 500V503M909.5 500V503M910.5 500V503M911.5 500V503M912.5 500V503M913.5 500V503M914.5 500V504M915.5 500V503M916.5 500V503M917.5 500V503M918.5 500V503M919.5 500V503M920.5 500V503M921.5 500V504M922.5 500V503M923.5 500V503M924.5 500V503M925.5 500V503M926.5 500V504M927.5 500V504M928.5 500V503M929.5 500V503M930.5 500V504M931.5 500V503M932.5 500V503M933.5 500V504M934.5 500V503M935.5 500V503M936.5 500V503M937.5 500V503M938.5 500V503M939.5 500V503M940.5 500V503M941.5 500V503M942.5 500V503M943.5 500V503M944.5 500V503M945.5 500V504M946.5 500V503M947.5 500V503M948.5 500V503M949.5 500V503M950.5 500V503M951.5 500V503M952.5 500V503M953.5 500V503M954.5 500V503M955.5 500V503M956.5 500V503M957.5 500V503M958.5 500V503M959.5 500V503M960.5 500V503M961.5 500V503M962.5 500V503M963.5 500V503M964.5 500V503M965.5 500V503M966.5 500V503M967.5 500V503M968.5 500V503M969.5 500V503M970.5 500V503M971.5 500V503M972.5 500V503M973.5 500V503M974.5 500V503M975.5 500V503M976.5 500V503M977.5 500V503M978.5 500V503M979.5 500V503M980.5 500V503M981.5 500V503M982.5 500V503M983.5 500V503M984.5 500V503M985.5 500V503M986.5 500V503M987.5 500V503M988.5 500V503M989.5 500V503M990.5 500V503M991.5 500V504M992.5 500V503M993.5 500V503M994.5 500V504M995.5 500V503M996.5 500V503M997.5 500V503M998.5 500V503M999.5 500V503M1000.5 500V503M1001.5 500V503M1002.5 500V503M1003.5 500V503M1004.5 500V503M1005.5 500V503M1006.5 500V503M1007.5 500V503M1008.5 500V503M1009.5 500V503M1010.5 500V503M1011.5 500V503M1012.5 500V503M1013.5 500V503M1014.5 500V503M1015.5 500V503M1016.5 500V503M1017.5 500V503M1018.5 500V503M1019.5 500V503M1020.5 500V503M1021.5 500V503M1022.5 500V503M1023.5 500V503M1024.5 500V503M1025.5 500V503M1026.5 500V503M1027.5 500V503M1028.5 500V503M1029.5 500V503M1030.5 500V503M1031.5 500V503M1032.5 500V504M1033.5 500V504M1034.5 500V503M1035.5 500V503M1036.5 500V503M1037.5 500V503M1038.5 500V503M1039.5 500V503M1040.5 500V503M1041.5 500V503M1042.5 500V503M1043.5 500V503M1044.5 500V504M1045.5 500V503M1046.5 500V503M1047.5 500V503M1048.5 500V503M1049.5 500V504M1050.5 500V503M1051.5 500V503M1052.5 500V503M1053.5 500V503M1054.5 500V503M1055.5 500V503M1056.5 500V503M1057.5 500V504M1058.5 500V503M1059.5 500V504M1060.5 500V503M1061.5 500V504M1062.5 500V503M1063.5 500V503M1064.5 500V503M1065.5 500V503M1066.5 500V503M1067.5 500V503M1068.5 500V503M1069.5 500V503M1070.5 500V503M1071.5 500V503M1072.5 500V503M1073.5 500V503M1074.5 500V503M1075.5 500V504M1076.5 500V503M1077.5 500V503M1078.5 500V504M1079.5 500V503M1080.5 500V503M1081.5 500V503M1082.5 500V503M1083.5 500V503M1084.5 500V503M1085.5 500V503M1086.5 500V503M1087.5 500V504M1088.5 500V503M1089.5 500V503M1090.5 500V503M1091.5 500V503M1092.5 500V503M1093.5 500V504M1094.5 500V503M1095.5 500V503M1096.5 500V503M1097.5 500V503M1098.5 500V503M1099.5 500V504M1100.5 500V503M1101.5 500V503M1102.5 500V503M1103.5 500V503M1104.5 500V503M1105.5 500V503M1106.5 500V503M1107.5 500V503M1108.5 500V503M1109.5 500V503M1110.5 500V504M1111.5 500V503M1112.5 500V503M1113.5 500V503M1114.5 500V503M1115.5 500V503M1116.5 500V503M1117.5 500V503M1118.5 500V503M1119.5 500V503M1120.5 500V503M1121.5 500V503M1122.5 500V504M1123.5 500V503M1124.5 500V503M1125.5 500V503M1126.5 500V503M1127.5 500V503M1128.5 500V504M1129.5 500V503M1130.5 500V503M1131.5 500V503M1132.5 500V503M1133.5 500V503M1134.5 500V503M1135.5 500V503M1136.5 500V503M1137.5 500V503M1138.5 500V503M1139.5 500V503M1140.5 500V503M1141.5 500V503M1142.5 500V504M1143.5 500V503M1144.5 500V503M1145.5 500V503M1146.5 500V503M1147.5 500V503M1148.5 500V504M1149.5 500V503M1150.5 500V503M1151.5 500V503M1152.5 500V503M1153.5 500V503M1154.5 500V503M1155.5 500V503M1156.5 500V503M1157.5 500V503M1158.5 500V503M1159.5 500V503M1160.5 500V503M1161.5 500V503M1162.5 500V503M1163.5 500V503M1164.5 500V503M1165.5 500V503M1166.5 500V503M1167.5 500V504M1168.5 500V503M1169.5 500V503M1170.5 500V503M1171.5 500V503M1172.5 500V503M1173.5 500V503M1174.5 500V503M1175.5 500V503M1176.5 500V503M1177.5 500V503M1178.5 500V503M1179.5 500V503M1180.5 500V503M1181.5 500V503M1182.5 500V503M1183.5 500V503M1184.5 500V503M1185.5 500V503M1186.5 500V503M1187.5 500V503M1188.5 500V504M1189.5 500V503M1190.5 500V503M1191.5 500V503M1192.5 500V503M1193.5 500V503M1194.5 500V503M1195.5 500V503M1196.5 500V503M1197.5 500V503M1198.5 500V503M1199.5 500V504M1200.5 500V503M1201.5 500V503M1202.5 500V503M1203.5 500V503M1204.5 500V503M1205.5 500V503M1206.5 500V503M1207.5 500V503M1208.5 500V503M1209.5 500V503M1210.5 500V503M1211.5 500V503M1212.5 500V503M1213.5 500V503M1214.5 500V503M1215.5 500V503M1216.5 500V503M1217.5 500V503M1218.5 500V503M1219.5 500V503M1220.5 500V503M1221.5 500V503M1222.5 500V503M1223.5 500V503M1224.5 500V503M1225.5 500V504M1226.5 500V503M1227.5 500V503M1228.5 500V503M1229.5 500V503M1230.5 500V503M1231.5 500V503M1232.5 500V503M1233.5 500V503M1234.5 500V503M1235.5 500V503M1236.5 500V503M1237.5 500V503M1238.5 500V503M1239.5 500V503M1240.5 500V503M1241.5 500V503M1242.5 500V503M1243.5 500V503M1244.5 500V503M1245.5 500V503M1246.5 500V504M1247.5 500V503M1248.5 500V503M1249.5 500V503M1250.5 500V503M1251.5 500V503M1252.5 500V503M1253.5 500V503M1254.5 500V503M1255.5 500V503M1256.5 500V503M1257.5 500V503M1258.5 500V503M1259.5 500V504M1260.5 500V503M1261.5 500V503M1262.5 500V503M1263.5 500V503M1264.5 500V503M1265.5 500V503M1266.5 500V503M1267.5 500V503M1268.5 500V503M1269.5 500V503M1270.5 500V503M1271.5 500V503M1272.5 500V503M1273.5 500V503M1274.5 500V503M1275.5 500V503M1276.5 500V504M1277.5 500V503M1278.5 500V504M1279.5 500V503M1280.5 500V503M1281.5 500V503M1282.5 500V503M1283.5 500V503M1284.5 500V503M1285.5 500V504M1286.5 500V503M1287.5 500V503M1288.5 500V503M1289.5 500V503M1290.5 500V503M1291.5 500V503M1292.5 500V504M1293.5 500V503M1294.5 500V504M1295.5 500V503M1296.5 500V503M1297.5 500V503M1298.5 500V503M1299.5 500V503M1300.5 500V504M1301.5 500V503M1302.5 500V503M1303.5 500V503M1304.5 500V503M1305.5 500V503M1306.5 500V503M1307.5 500V503M1308.5 500V503M1309.5 500V503M1310.5 500V503M1311.5 500V503M1312.5 500V503M1313.5 500V503M1314.5 500V504M1315.5 500V503M1316.5 500V503M1317.5 500V503M1318.5 500V503M1319.5 500V503M1320.5 500V503M1321.5 500V503M1322.5 500V503M1323.5 500V503M1324.5 500V503M1325.5 500V503M1326.5 500V503M1327.5 500V503M1328.5 500V503M1329.5 500V503M1330.5 500V503M1331.5 500V503M1332.5 500V503M1333.5 500V503M1334.5 500V503M1335.5 500V503M1336.5 500V503M1337.5 500V503M1338.5 500V503M1339.5 500V503M1340.5 500V503M1341.5 500V503M1342.5 500V504M1343.5 500V503M1344.5 500V503M1345.5 500V503M1346.5 500V503M1347.5 500V503M1348.5 500V503M1349.5 500V503M1350.5 500V503M1351.5 500V503M1352.5 500V503M1353.5 500V503M1354.5 500V503M1355.5 500V503M1356.5 500V503M1357.5 500V503M1358.5 500V503M1359.5 500V503M1360.5 500V503M1361.5 500V503M1362.5 500V503M1363.5 500V503M1364.5 500V503M1365.5 500V503M1366.5 500V504M1367.5 500V503M1368.5 500V503M1369.5 500V503M1370.5 500V503M1371.5 500V503M1372.5 500V503M1373.5 500V503M1374.5 500V504M1375.5 500V503M1376.5 500V503M1377.5 500V503M1378.5 500V503M1379.5 500V503M1380.5 500V503M1381.5 500V503M1382.5 500V503M1383.5 500V503M1384.5 500V503M1385.5 500V503M1386.5 500V503M1387.5 500V503M1388.5 500V503M1389.5 500V503M1390.5 500V503M1391.5 500V503M1392.5 500V503M1393.5 500V503M1394.5 500V503M1395.5 500V503M1396.5 500V503M1397.5 500V504M1398.5 500V503M1399.5 500V503M1400.5 500V504M1401.5 500V503M1402.5 500V503M1403.5 500V503M1404.5 500V503M1405.5 500V503M1406.5 500V503M1407.5 500V503M1408.5 500V503M1409.5 500V503M1410.5 500V503M1411.5 500V503M1412.5 500V503M1413.5 500V503M1414.5 500V503M1415.5 500V503M1416.5 500V503M1417.5 500V503M1418.5 500V503M1419.5 500V503M1420.5 500V503M1421.5 500V503M1422.5 500V503M1423.5 500V503M1424.5 500V503M1425.5 500V503M1426.5 500V504M1427.5 500V503M1428.5 500V503M1429.5 500V503M1430.5 500V503M1431.5 500V503M1432.5 500V503M1433.5 500V503M1434.5 500V503M1435.5 500V504M1436.5 500V504M1437.5 500V503M1438.5 500V504M1439.5 500V503M1440.5 500V503M1441.5 500V503M1442.5 500V503M1443.5 500V503M1444.5 500V503M1445.5 500V504M1446.5 500V503M1447.5 500V503M1448.5 500V503M1449.5 500V504M1450.5 500V503M1451.5 500V503M1452.5 500V503M1453.5 500V503M1454.5 500V503M1455.5 500V503M1456.5 500V503M1457.5 500V503M1458.5 500V503M1459.5 500V503M1460.5 500V503M1461.5 500V503M1462.5 500V503M1463.5 500V503M1464.5 500V503M1465.5 500V503M1466.5 500V503M1467.5 500V503M1468.5 500V503M1469.5 500V503M1470.5 500V503M1471.5 500V503M1472.5 500V503M1473.5 500V503M1474.5 500V503M1475.5 500V503M1476.5 500V503M1477.5 500V504M1478.5 500V503M1479.5 500V503M1480.5 500V503M1481.5 500V503M1482.5 500V503M1483.5 500V503M1484.5 500V503M1485.5 500V503M1486.5 500V503M1487.5 500V503M1488.5 500V504M1489.5 500V503M1490.5 500V504M1491.5 500V503M1492.5 500V503M1493.5 500V503M1494.5 500V503M1495.5 500V504M1496.5 500V503M1497.5 500V503M1498.5 500V503M1499.5 500V503M1500.5 500V503M1501.5 500V503M1502.5 500V503M1503.5 500V503M1504.5 500V503M1505.5 500V503M1506.5 500V503M1507.5 500V503M1508.5 500V503M1509.5 500V503M1510.5 500V503M1511.5 500V503M1512.5 500V503M1513.5 500V503M1514.5 500V503M1515.5 500V503M1516.5 500V503M1517.5 500V504M1518.5 500V503M1519.5 500V503M1520.5 500V503M1521.5 500V503M1522.5 500V503M1523.5 500V503M1524.5 500V503M1525.5 500V504M1526.5 500V503M1527.5 500V503M1528.5 500V503M1529.5 500V503M1530.5 500V503M1531.5 500V503M1532.5 500V503M1533.5 500V503M1534.5 500V503M1535.5 500V503M1536.5 500V503M1537.5 500V503M1538.5 500V503M1539.5 500V503M1540.5 500V503M1541.5 500V503M1542.5 500V503M1543.5 500V503M1544.5 500V503M1545.5 500V503M1546.5 500V503M1547.5 500V503M1548.5 500V503M1549.5 500V503M1550.5 500V503M1551.5 500V503M1552.5 500V503M1553.5 500V504M1554.5 500V503M1555.5 500V503M1556.5 500V503M1557.5 500V503M1558.5 500V503M1559.5 500V503M1560.5 500V503M1561.5 501V503M1562.5 501V503M1563.5 501V504M1564.5 501V503M1565.5 501V503M1566.5 501V503M1567.5 501V503M1568.5 501V504M1569.5 501V504M1570.5 501V504M1571.5 501V504M1572.5 501V504M1573.5 500V504M1574.5 501V504M1575.5 501V504M1576.5 502V504M1577.5 502V504M1578.5 502V504M1579.5 502V505M1580.5 502V505M1581.5 502V504M1582.5 502V504M1583.5 502V505M1584.5 502V506M1585.5 502V506M1586.5 502V505M1587.5 502V505M1588.5 502V505M1589.5 501V505M1590.5 502V505M1591.5 503V505M1592.5 503V505M1593.5 503V505M1594.5 503V505M1595.5 503V505M1596.5 503V505M1597.5 503V505M1598.5 503V506M1599.5 503V506M1600.5 503V506M1601.5 503V506M1602.5 503V506M1603.5 503V506M1604.5 503V506M1605.5 503V506M1606.5 502V506M1607.5 503V506M1608.5 503V506M1609.5 503V506M1610.5 502V506M1611.5 503V506" stroke="#00c800" stroke-width="1" fill="none" shape-rendering="crispEdges" /><rect x="1599" y="502" width="1" height="75" fill="#00c800" shape-rendering="crispEdges" /><rect x="1602" y="502" width="1" height="75" fill="#00c800" shape-rendering="crispEdges" /><rect x="1605" y="502" width="1" height="75" fill="#00c800" shape-rendering="crispEdges" /><rect x="1608" y="502" width="1" height="75" fill="#00c800" shape-rendering="crispEdges" /><rect x="1611" y="502" width="1" height="75" fill="#00c800" shape-rendering="crispEdges" /><path d="M1612.5 500V576M1613.5 501V577M1614.5 501V578M1615.5 500V577M1616.5 501V577M1617.5 501V578M1618.5 501V576M1619.5 501V577M1620.5 501V577M1621.5 500V577M1622.5 500V577M1623.5 501V576M1624.5 500V577M1625.5 501V578M1626.5 501V576M1627.5 500V577M1628.5 501V577M1629.5 500V578M1630.5 501V578M1631.5 501V577M1632.5 501V577M1633.5 501V576M1634.5 501V576M1635.5 501V577M1636.5 500V577M1637.5 500V578M1638.5 501V578M1639.5 501V576M1640.5 500V578M1641.5 500V577M1642.5 501V577M1643.5 501V577M1644.5 501V576M1645.5 501V576M1646.5 501V576M1647.5 501V577M1648.5 501V576M1649.5 501V577M1650.5 500V576M1651.5 501V578M1652.5 500V576M1653.5 501V578M1654.5 500V577M1655.5 501V576M1656.5 501V577M1657.5 500V577M1658.5 501V577M1659.5 501V577M1660.5 501V577M1661.5 500V577M1662.5 501V577M1663.5 500V578M1664.5 501V576M1665.5 501V578M1666.5 501V577M1667.5 500V577M1668.5 501V577M1669.5 501V577M1670.5 501V577M1671.5 501V576M1672.5 501V576M1673.5 501V578M1674.5 501V576M1675.5 501V576M1676.5 501V578M1677.5 500V578M1678.5 501V577M1679.5 500V577M1680.5 501V576M1681.5 500V578M1682.5 501V577M1683.5 501V577M1684.5 501V578M1685.5 501V578M1686.5 501V578M1687.5 501V578M1688.5 501V578M1689.5 501V578M1690.5 500V578M1691.5 500V578M1692.5 501V576M1693.5 501V577M1694.5 501V577M1695.5 501V578M1696.5 501V577M1697.5 500V578M1698.5 501V576M1699.5 501V577M1700.5 501V577M1701.5 501V578M1702.5 500V576M1703.5 501V577M1704.5 501V578M1705.5 501V578M1706.5 501V577M1707.5 500V577M1708.5 501V577M1709.5 501V577M1710.5 501V577M1711.5 501V576M1712.5 501V577M1713.5 501V577M1714.5 501V577M1715.5 501V578M1716.5 501V578M1717.5 501V577M1718.5 501V578M1719.5 501V577M1720.5 501V576M1721.5 501V577M1722.5 500V578M1723.5 501V578M1724.5 500V576M1725.5 501V578M1726.5 501V576M1727.5 501V578M1728.5 500V576M1729.5 500V577M1730.5 501V576M1731.5 501V577M1732.5 501V576M1733.5 501V577M1734.5 501V578M1735.5 501V576M1736.5 500V577M1737.5 501V578M1738.5 501V576M1739.5 500V577M1740.5 501V576M1741.5 500V578M1742.5 501V576M1743.5 500V577M1744.5 501V576M1745.5 501V577M1746.5 500V576M1747.5 500V577M1748.5 500V577M1749.5 501V578M1750.5 501V577M1751.5 501V576M1752.5 501V576M1753.5 501V577M1754.5 501V576M1755.5 501V577M1756.5 500V577M1757.5 500V578M1758.5 500V576M1759.5 501V577M1760.5 501V577M1761.5 500V577M1762.5 500V578M1763.5 501V577M1764.5 501V577M1765.5 501V577M1766.5 501V577M1767.5 501V578M1768.5 500V577M1769.5 501V577M1770.5 501V577M1771.5 501V577M1772.5 500V579M1773.5 500V578M1774.5 501V578M1775.5 501V579M1776.5 501V579M1777.5 501V579M1778.5 501V577M1779.5 501V577M1780.5 501V578M1781.5 501V578M1782.5 501V577M1783.5 501V578M1784.5 500V577M1785.5 501V577M1786.5 501V578M1787.5 500V579M1788.5 500V578M1789.5 501V578M1790.5 500V578M1791.5 501V578M1792.5 501V578M1793.5 501V578M1794.5 501V579M1795.5 501V578M1796.5 500V579M1797.5 500V578M1798.5 500V579M1799.5 501V578M1800.5 501V578M1801.5 501V578M1802.5 501V578M1803.5 501V577M1804.5 501V579M1805.5 501V579M1806.5 501V578M1807.5 501V578M1808.5 501V578M1809.5 501V577M1810.5 501V578M1811.5 501V578M1812.5 501V578M1813.5 501V578M1814.5 501V577M1815.5 501V577M1816.5 501V578M1817.5 501V578M1818.5 500V578M1819.5 501V578M1820.5 501V579M1821.5 500V579M1822.5 500V579M1823.5 501V578M1824.5 501V578M1825.5 501V578M1826.5 500V577M1827.5 500V577M1828.5 500V578M1829.5 500V578M1830.5 501V578M1831.5 501V577M1832.5 501V577M1833.5 501V578M1834.5 501V578M1835.5 501V579M1836.5 501V579M1837.5 501V578M1838.5 501V579M1839.5 501V578M1840.5 500V579M1841.5 501V578M1842.5 501V578M1843.5 501V578M1844.5 501V578M1845.5 501V578M1846.5 501V579M1847.5 500V578M1848.5 500V579M1849.5 500V578M1850.5 501V577M1851.5 501V577M1852.5 501V578M1853.5 501V578M1854.5 501V577M1855.5 500V578M1856.5 500V578M1857.5 501V577M1858.5 501V578M1859.5 501V578M1860.5 500V579M1861.5 501V579M1862.5 501V578M1863.5 501V578M1864.5 500V579M1865.5 500V578M1866.5 501V577M1867.5 501V578M1868.5 501V578M1869.5 501V577M1870.5 501V578M1871.5 500V578M1872.5 500V579M1873.5 500V577M1874.5 500V578M1875.5 501V578M1876.5 501V578M1877.5 500V578M1878.5 501V577M1879.5 501V578M1880.5 500V579M1881.5 501V577M1882.5 501V577M1883.5 501V579M1884.5 500V577M1885.5 500V577M1886.5 501V579M1887.5 501V578M1888.5 500V577M1889.5 501V578M1890.5 500V579M1891.5 501V577M1892.5 500V577M1893.5 501V579M1894.5 500V577M1895.5 501V578M1896.5 501V578M1897.5 501V577M1898.5 501V578M1899.5 501V578M1900.5 500V578" stroke="#00a000" stroke-width="1" fill="none" shape-rendering="crispEdges" /><path d="M1612 506 L1660 509 L1700 511 L1760 506 L1901 504" stroke="#00b800" stroke-width="3" fill="none" opacity="0.8"/><path d="M1612 573 L1760 575 L1901 574" stroke="#00c000" stroke-width="2" fill="none" opacity="0.6"/><rect x="91" y="689" width="639" height="2" fill="#ff0000" shape-rendering="crispEdges" /><rect x="730" y="590" width="1" height="101" fill="#ff0000" shape-rendering="crispEdges" /><path d="M731.5 590V605M732.5 590V604M733.5 590V604M734.5 590V603M735.5 590V604M736.5 590V604M737.5 590V604M738.5 590V604M739.5 590V605M740.5 590V604M741.5 590V606M742.5 590V612M743.5 590V604M744.5 590V606M745.5 590V604M746.5 590V605M747.5 590V606M748.5 590V605M749.5 590V605M750.5 590V606M751.5 590V606M752.5 590V606M753.5 590V605M754.5 590V606M755.5 590V606M756.5 590V606M757.5 590V607M758.5 590V606M759.5 590V606M760.5 590V607M761.5 590V614M762.5 590V608M763.5 590V612M764.5 590V607M765.5 590V608M766.5 590V608M767.5 590V606M768.5 590V607M769.5 590V607M770.5 590V607M771.5 590V608M772.5 590V607M773.5 590V607M774.5 590V608M775.5 590V609M776.5 590V608M777.5 590V607M778.5 590V607M779.5 590V609M780.5 590V609M781.5 590V608M782.5 590V609M783.5 590V608M784.5 590V609M785.5 590V608M786.5 590V610M787.5 590V609M788.5 590V609M789.5 590V610M790.5 590V608M791.5 590V608M792.5 590V609M793.5 590V610M794.5 590V610M795.5 590V609M796.5 590V610M797.5 590V610M798.5 590V609M799.5 590V611M800.5 590V610M801.5 590V614M802.5 590V610M803.5 590V610M804.5 590V609M805.5 590V610M806.5 590V611M807.5 590V611M808.5 590V611M809.5 590V611M810.5 590V611M811.5 590V610M812.5 590V611M813.5 590V610M814.5 590V611M815.5 590V611M816.5 590V611M817.5 590V611M818.5 590V610M819.5 590V612M820.5 590V611M821.5 590V612M822.5 590V611M823.5 590V611M824.5 590V611M825.5 590V611M826.5 590V611M827.5 590V612M828.5 590V612M829.5 590V612M830.5 590V612M831.5 590V612M832.5 590V612M833.5 590V612M834.5 590V613M835.5 590V611M836.5 590V613M837.5 590V612M838.5 590V612M839.5 590V611M840.5 590V613M841.5 590V613M842.5 590V613M843.5 590V612M844.5 590V613M845.5 590V612M846.5 590V612M847.5 590V613M848.5 590V613M849.5 590V613M850.5 590V614M851.5 590V614M852.5 590V621M853.5 590V614M854.5 590V617M855.5 590V615M856.5 590V615M857.5 590V616M858.5 590V615M859.5 590V615M860.5 590V621M861.5 590V616M862.5 590V617M863.5 590V623M864.5 590V618M865.5 590V617M866.5 590V617M867.5 590V617M868.5 590V621M869.5 590V618M870.5 590V620M871.5 590V619M872.5 590V620M873.5 590V628M874.5 590V621M875.5 590V621M876.5 590V622M877.5 590V622M878.5 590V621M879.5 590V622M880.5 590V623M881.5 594V625M882.5 593V625M883.5 591V626M884.5 590V628M885.5 593V628M886.5 590V633M887.5 590V624M888.5 594V617M888.5 626V626M889.5 594V629M890.5 595V627M891.5 590V628M892.5 601V629M893.5 600V631M894.5 601V632M895.5 597V635M896.5 601V635M897.5 595V641M898.5 601V632M899.5 602V619M899.5 631V632M900.5 602V634M901.5 597V636M902.5 600V643M903.5 609V637M904.5 609V640M905.5 609V643M906.5 610V648M907.5 608V643M908.5 608V648M909.5 608V639M910.5 605V633M910.5 643V643M911.5 609V644M912.5 604V649M913.5 610V647M914.5 617V645M915.5 617V647M916.5 617V648M917.5 617V649M918.5 612V651M919.5 617V652M920.5 609V653M921.5 617V638M921.5 648V648M922.5 616V649M923.5 612V656M924.5 615V650M925.5 623V651M926.5 619V653M927.5 622V653M928.5 623V654M929.5 623V654M930.5 622V658M931.5 623V651M932.5 621V642M932.5 651V653M933.5 614V652M934.5 621V653M935.5 620V657M936.5 628V655M937.5 627V657M938.5 627V658M939.5 628V658M940.5 628V659M941.5 627V662M942.5 626V655M943.5 628V657M944.5 623V657M945.5 624V657M946.5 623V659M947.5 634V659M948.5 629V660M949.5 631V661M950.5 632V663M951.5 628V664M952.5 632V665M953.5 631V658M954.5 631V648M954.5 658V659M955.5 626V661M956.5 626V660M957.5 626V662M958.5 636V662M959.5 631V664M960.5 636V668M961.5 634V665M962.5 634V673M963.5 635V667M964.5 633V660M965.5 633V661M966.5 632V662M967.5 631V662M968.5 631V663M969.5 637V665M970.5 637V666M971.5 638V666M972.5 633V667M973.5 637V673M974.5 632V670M975.5 635V662M976.5 628V660M976.5 670V670M977.5 635V663M978.5 634V672M979.5 631V666M980.5 640V666M981.5 639V668M982.5 640V669M983.5 639V673M984.5 639V674M985.5 636V673M986.5 637V664M987.5 631V654M987.5 664V665M988.5 636V666M989.5 637V666M990.5 632V669M991.5 643V673M992.5 635V669M993.5 642V670M994.5 641V671M995.5 641V673M996.5 637V674M997.5 636V667M998.5 640V661M998.5 670V671M999.5 639V673M1000.5 632V669M1001.5 636V669M1002.5 643V674M1003.5 643V670M1004.5 642V671M1005.5 642V676M1006.5 642V672M1007.5 642V676M1008.5 640V667M1009.5 641V659M1009.5 668V668M1010.5 640V670M1011.5 635V669M1012.5 634V670M1013.5 645V670M1014.5 645V671M1015.5 643V672M1016.5 644V673M1017.5 639V679M1018.5 639V675M1019.5 636V671M1020.5 642V668M1021.5 641V675M1022.5 640V671M1023.5 636V670M1024.5 645V672M1025.5 645V672M1026.5 644V673M1027.5 644V674M1028.5 641V674M1029.5 642V675M1030.5 643V669M1031.5 638V666M1031.5 676V676M1032.5 636V670M1033.5 642V672M1034.5 638V672M1035.5 641V672M1036.5 645V679M1037.5 640V680M1038.5 644V675M1039.5 644V674M1040.5 644V680M1041.5 638V669M1042.5 644V658M1042.5 669V670M1043.5 643V671M1044.5 641V672M1045.5 640V673M1046.5 647V674M1047.5 642V673M1048.5 646V675M1049.5 645V682M1050.5 644V675M1051.5 645V679M1052.5 640V676M1053.5 640V662M1053.5 670V671M1054.5 643V671M1055.5 641V673M1056.5 637V677M1057.5 648V674M1058.5 644V675M1059.5 646V675M1060.5 639V680M1061.5 641V677M1062.5 645V681M1063.5 644V670M1064.5 645V672M1065.5 641V673M1066.5 644V672M1067.5 638V674M1068.5 648V673M1069.5 647V675M1070.5 646V676M1071.5 646V678M1072.5 646V676M1073.5 646V680M1074.5 645V676M1075.5 644V663M1075.5 670V671M1076.5 645V672M1077.5 643V679M1078.5 641V674M1079.5 648V676M1080.5 647V679M1081.5 648V676M1082.5 648V676M1083.5 643V677M1084.5 646V681M1085.5 645V673M1086.5 644V678M1087.5 645V677M1088.5 643V677M1089.5 639V674M1090.5 645V675M1091.5 648V676M1092.5 647V677M1093.5 647V677M1094.5 646V679M1095.5 646V678M1096.5 642V672M1097.5 639V673M1098.5 637V673M1099.5 644V678M1100.5 643V675M1101.5 649V676M1102.5 642V676M1103.5 648V677M1104.5 648V678M1105.5 643V678M1106.5 647V682M1107.5 647V679M1108.5 646V673M1109.5 644V674M1110.5 645V674M1111.5 643V674M1112.5 649V675M1113.5 648V676M1114.5 645V678M1115.5 648V677M1116.5 648V679M1117.5 646V683M1118.5 646V673M1119.5 642V665M1119.5 672V674M1120.5 646V679M1121.5 645V674M1122.5 640V679M1123.5 649V675M1124.5 645V676M1125.5 648V678M1126.5 648V678M1127.5 648V677M1128.5 646V682M1129.5 645V673M1130.5 644V662M1130.5 672V674M1131.5 640V680M1132.5 636V674M1133.5 640V675M1134.5 650V675M1135.5 645V676M1136.5 647V676M1137.5 644V678M1138.5 646V679M1139.5 647V681M1140.5 647V680M1141.5 645V660M1141.5 671V672M1142.5 645V680M1143.5 644V675M1144.5 641V674M1145.5 644V675M1146.5 642V680M1147.5 649V676M1148.5 648V678M1149.5 644V683M1150.5 646V682M1151.5 646V672M1152.5 639V663M1152.5 673V674M1153.5 646V675M1154.5 645V675M1155.5 641V681M1156.5 650V679M1157.5 649V676M1158.5 647V676M1159.5 648V677M1160.5 646V679M1161.5 645V681M1162.5 645V677M1163.5 645V673M1164.5 645V674M1165.5 637V674M1166.5 640V675M1167.5 649V676M1168.5 650V676M1169.5 648V682M1170.5 647V678M1171.5 646V679M1172.5 646V682M1173.5 645V674M1174.5 637V668M1174.5 676V677M1175.5 644V674M1176.5 644V675M1177.5 641V675M1178.5 649V675M1179.5 649V677M1180.5 649V676M1181.5 648V678M1182.5 641V679M1183.5 642V684M1184.5 645V673M1185.5 642V673M1186.5 641V674M1187.5 643V674M1188.5 642V674M1189.5 644V676M1190.5 644V676M1191.5 649V677M1192.5 644V678M1193.5 647V679M1194.5 647V681M1195.5 645V673M1196.5 646V661M1196.5 673V673M1197.5 645V673M1198.5 645V678M1199.5 640V676M1200.5 649V675M1201.5 650V676M1202.5 649V677M1203.5 641V678M1204.5 647V678M1205.5 646V682M1206.5 645V678M1207.5 646V663M1207.5 671V673M1208.5 644V679M1209.5 638V680M1210.5 639V676M1211.5 650V676M1212.5 649V682M1213.5 648V678M1214.5 648V678M1215.5 646V677M1216.5 647V683M1217.5 647V672M1218.5 644V666M1218.5 673V674M1219.5 645V674M1220.5 644V674M1221.5 642V683M1222.5 650V676M1223.5 645V677M1224.5 648V676M1225.5 648V677M1226.5 645V678M1227.5 641V682M1228.5 645V672M1229.5 642V666M1229.5 673V674M1230.5 644V679M1231.5 643V674M1232.5 641V676M1233.5 649V676M1234.5 650V676M1235.5 646V677M1236.5 647V678M1237.5 647V679M1238.5 646V684M1239.5 646V673M1240.5 645V668M1240.5 676V677M1241.5 644V674M1242.5 645V675M1243.5 640V675M1244.5 649V675M1245.5 642V679M1246.5 646V678M1247.5 647V677M1248.5 641V684M1249.5 647V682M1250.5 643V677M1251.5 642V675M1252.5 644V676M1253.5 643V675M1254.5 639V676M1255.5 643V676M1256.5 648V676M1257.5 647V678M1258.5 647V677M1259.5 647V679M1260.5 645V683M1261.5 645V674M1262.5 645V678M1263.5 645V677M1264.5 638V674M1265.5 640V675M1266.5 649V675M1267.5 649V677M1268.5 648V681M1269.5 647V677M1270.5 647V678M1271.5 647V681M1272.5 646V672M1273.5 646V663M1273.5 673V673M1274.5 644V676M1275.5 645V674M1276.5 643V675M1277.5 650V683M1278.5 650V676M1279.5 649V678M1280.5 648V678M1281.5 647V678M1282.5 646V683M1283.5 647V674M1284.5 645V662M1284.5 673V673M1285.5 645V674M1286.5 643V676M1287.5 642V675M1288.5 646V675M1289.5 645V676M1290.5 648V678M1291.5 647V685M1292.5 647V680M1293.5 646V680M1294.5 645V674M1295.5 646V661M1295.5 674V674M1296.5 645V682M1297.5 644V680M1298.5 639V675M1299.5 650V676M1300.5 649V677M1301.5 649V680M1302.5 647V679M1303.5 648V682M1304.5 646V681M1305.5 639V673M1306.5 645V677M1307.5 645V675M1308.5 643V674M1309.5 642V675M1310.5 649V676M1311.5 649V677M1312.5 648V678M1313.5 647V680M1314.5 647V678M1315.5 646V682M1316.5 643V680M1317.5 645V673M1318.5 644V678M1319.5 645V681M1320.5 640V676M1321.5 644V676M1322.5 648V677M1323.5 647V678M1324.5 648V678M1325.5 648V678M1326.5 646V683M1327.5 640V673M1328.5 645V681M1329.5 644V674M1330.5 644V681M1331.5 641V681M1332.5 648V677M1333.5 645V678M1334.5 648V678M1335.5 647V678M1336.5 647V678M1337.5 645V684M1338.5 646V674M1339.5 645V661M1339.5 672V673M1340.5 645V675M1341.5 643V681M1342.5 641V677M1343.5 650V676M1344.5 649V677M1345.5 649V677M1346.5 648V683M1347.5 647V678M1348.5 646V683M1349.5 642V673M1350.5 640V670M1350.5 677V679M1351.5 645V678M1352.5 644V674M1353.5 641V675M1354.5 649V676M1355.5 650V677M1356.5 645V678M1357.5 647V682M1358.5 646V679M1359.5 647V683M1360.5 639V678M1361.5 645V679M1362.5 646V674M1363.5 643V682M1364.5 640V676M1365.5 649V676M1366.5 644V676M1367.5 649V678M1368.5 642V679M1369.5 646V680M1370.5 646V680M1371.5 641V674M1372.5 646V676M1373.5 643V675M1374.5 644V674M1375.5 642V682M1376.5 650V675M1377.5 649V677M1378.5 649V677M1379.5 647V678M1380.5 641V685M1381.5 646V680M1382.5 644V672M1383.5 645V673M1384.5 644V674M1385.5 641V675M1386.5 639V676M1387.5 649V676M1388.5 646V679M1389.5 643V677M1390.5 647V678M1391.5 643V682M1392.5 647V680M1393.5 646V674M1394.5 640V664M1394.5 674V675M1395.5 644V675M1396.5 645V675M1397.5 640V675M1398.5 649V677M1399.5 649V683M1400.5 649V677M1401.5 646V679M1402.5 645V681M1403.5 646V682M1404.5 645V673M1405.5 645V665M1405.5 672V674M1406.5 645V675M1407.5 643V675M1408.5 642V676M1409.5 649V677M1410.5 650V676M1411.5 649V678M1412.5 648V678M1413.5 648V679M1414.5 647V683M1415.5 640V673M1416.5 645V670M1416.5 679V680M1417.5 642V674M1418.5 644V675M1419.5 640V676M1420.5 649V676M1421.5 650V677M1422.5 649V678M1423.5 643V679M1424.5 642V679M1425.5 644V681M1426.5 645V674M1427.5 643V673M1428.5 644V675M1429.5 645V676M1430.5 638V676M1431.5 646V677M1432.5 649V677M1433.5 649V678M1434.5 647V678M1435.5 643V678M1436.5 645V683M1437.5 647V673M1438.5 646V666M1438.5 673V675M1439.5 644V674M1440.5 637V676M1441.5 642V676M1442.5 642V675M1443.5 643V677M1444.5 649V678M1445.5 648V678M1446.5 646V678M1447.5 645V682M1448.5 645V673M1449.5 645V661M1449.5 674V674M1450.5 644V681M1451.5 645V675M1452.5 643V676M1453.5 649V683M1454.5 649V677M1455.5 649V677M1456.5 646V680M1457.5 647V682M1458.5 645V682M1459.5 645V674M1460.5 646V664M1460.5 673V674M1461.5 644V674M1462.5 645V678M1463.5 643V677M1464.5 649V677M1465.5 649V676M1466.5 648V677M1467.5 647V678M1468.5 647V685M1469.5 646V681M1470.5 647V674M1471.5 640V661M1471.5 674V674M1472.5 646V674M1473.5 644V675M1474.5 642V676M1475.5 649V677M1476.5 649V681M1477.5 649V677M1478.5 647V682M1479.5 648V679M1480.5 647V682M1481.5 647V674M1482.5 643V664M1482.5 674V674M1483.5 644V674M1484.5 643V680M1485.5 641V677M1486.5 650V679M1487.5 648V676M1488.5 649V684M1489.5 648V677M1490.5 646V683M1491.5 646V681M1492.5 642V674M1493.5 645V662M1493.5 673V674M1494.5 644V679M1495.5 640V675M1496.5 640V679M1497.5 649V681M1498.5 648V676M1499.5 648V678M1500.5 645V678M1501.5 642V678M1502.5 647V680M1503.5 646V678M1504.5 645V662M1504.5 674V674M1505.5 645V674M1506.5 643V681M1507.5 641V676M1508.5 650V677M1509.5 650V677M1510.5 644V679M1511.5 648V677M1512.5 647V679M1513.5 645V682M1514.5 646V677M1515.5 646V662M1515.5 673V674M1516.5 644V675M1517.5 638V675M1518.5 642V683M1519.5 648V683M1520.5 648V681M1521.5 649V685M1522.5 645V679M1523.5 648V678M1524.5 646V682M1525.5 638V673M1526.5 646V674M1527.5 644V678M1528.5 644V676M1529.5 639V676M1530.5 650V681M1531.5 649V677M1532.5 648V679M1533.5 649V681M1534.5 644V683M1535.5 641V680M1536.5 647V674M1537.5 646V668M1537.5 677V677M1538.5 641V675M1539.5 644V674M1540.5 639V676M1541.5 648V675M1542.5 648V675M1543.5 642V676M1544.5 646V675M1545.5 640V677M1546.5 637V677M1547.5 637V669M1548.5 641V661M1548.5 669V670M1549.5 638V670M1550.5 636V669M1551.5 633V669M1552.5 637V669M1553.5 640V670M1554.5 633V673M1555.5 638V670M1556.5 635V670M1557.5 635V671M1558.5 634V662M1559.5 631V652M1559.5 664V664M1560.5 631V664M1561.5 629V662M1562.5 625V662M1563.5 633V667M1564.5 629V667M1565.5 631V662M1566.5 626V661M1567.5 629V662M1568.5 627V664M1569.5 626V655M1570.5 627V647M1570.5 656V657M1571.5 624V655M1572.5 624V659M1573.5 620V654M1574.5 627V654M1575.5 626V654M1576.5 625V655M1577.5 624V660M1578.5 617V654M1579.5 622V653M1580.5 621V646M1581.5 619V653M1582.5 617V646M1583.5 616V647M1584.5 611V646M1585.5 613V646M1586.5 610V646M1587.5 615V651M1588.5 615V646M1589.5 610V645M1590.5 611V649M1591.5 608V638M1592.5 605V626M1592.5 636V638M1593.5 602V637M1594.5 600V636M1595.5 597V635M1596.5 601V635M1597.5 599V632M1598.5 597V632M1599.5 594V631M1600.5 592V631M1601.5 591V631M1602.5 591V623M1603.5 590V623M1604.5 590V622M1605.5 592V622M1606.5 591V622M1607.5 591V621M1608.5 591V620M1609.5 591V625M1610.5 591V617M1611.5 591V623M1612.5 591V616M1613.5 591V616M1614.5 591V616M1615.5 591V616M1616.5 591V615M1617.5 591V614M1618.5 591V615M1619.5 591V614M1620.5 591V614M1621.5 591V623M1622.5 591V614M1623.5 591V620M1624.5 591V614M1625.5 591V612M1626.5 591V613M1627.5 591V614M1628.5 591V613M1629.5 591V613M1630.5 591V613M1631.5 591V613M1632.5 591V613M1633.5 591V621M1634.5 591V611M1635.5 591V612M1636.5 591V613M1637.5 591V613M1638.5 591V613M1639.5 591V613M1640.5 591V611M1641.5 591V612M1642.5 591V612M1643.5 591V612M1644.5 591V612M1645.5 591V611M1646.5 591V614M1647.5 591V612M1648.5 591V612M1649.5 591V612M1650.5 591V611M1651.5 591V611M1652.5 591V611M1653.5 591V611M1654.5 591V610M1655.5 591V615M1656.5 591V611M1657.5 591V610M1658.5 591V610M1659.5 591V612M1660.5 591V611M1661.5 591V617M1662.5 591V610M1663.5 591V609M1664.5 591V608M1665.5 591V609M1666.5 591V608M1667.5 591V608M1668.5 591V607M1669.5 591V607M1670.5 591V612M1671.5 591V605M1672.5 591V612M1673.5 591V605M1674.5 591V611M1675.5 591V603M1676.5 591V604M1677.5 591V603M1678.5 591V603M1679.5 591V601M1680.5 591V601M1681.5 591V601M1682.5 591V601M1683.5 591V601M1684.5 591V601M1685.5 591V601M1686.5 591V601M1687.5 591V601M1688.5 591V601M1689.5 591V601M1690.5 591V601M1691.5 591V601M1692.5 591V602M1693.5 591V601M1694.5 591V601M1695.5 591V601M1696.5 591V602M1697.5 591V601M1698.5 591V602M1699.5 591V601M1700.5 591V601M1701.5 591V602M1702.5 591V602M1703.5 591V601M1704.5 591V601M1705.5 591V601M1706.5 591V602M1707.5 591V601M1708.5 591V601M1709.5 591V602M1710.5 591V601M1711.5 591V601M1712.5 591V601M1713.5 591V601M1714.5 591V602M1715.5 591V601M1716.5 591V601M1717.5 591V601M1718.5 591V601M1719.5 591V601M1720.5 591V602M1721.5 591V601M1722.5 591V601M1723.5 591V601M1724.5 591V601M1725.5 591V601M1726.5 591V602M1727.5 591V601M1728.5 591V602M1729.5 591V602M1730.5 591V601M1731.5 591V601M1732.5 591V601M1733.5 591V601M1734.5 591V601M1735.5 591V601M1736.5 591V601M1737.5 591V601M1738.5 591V601M1739.5 591V601M1740.5 591V601M1741.5 591V601M1742.5 591V602M1743.5 591V601M1744.5 591V601M1745.5 591V601M1746.5 591V602M1747.5 591V601M1748.5 591V601M1749.5 591V601M1750.5 591V602M1751.5 591V602M1752.5 591V602M1753.5 591V601M1754.5 591V601M1755.5 591V601M1756.5 591V601M1757.5 591V601M1758.5 591V601M1759.5 591V601M1760.5 591V601M1761.5 591V602M1762.5 591V601M1763.5 591V601M1764.5 591V601M1765.5 591V601M1766.5 591V601M1767.5 591V602M1768.5 591V602M1769.5 591V601M1770.5 591V601M1771.5 591V601M1772.5 591V601M1773.5 591V602M1774.5 591V601M1775.5 591V602M1776.5 591V601M1777.5 591V601M1778.5 591V602M1779.5 591V601M1780.5 591V601M1781.5 591V601M1782.5 591V601M1783.5 591V602M1784.5 591V601M1785.5 591V602M1786.5 591V602M1787.5 591V601M1788.5 591V601M1789.5 591V602M1790.5 591V601M1791.5 591V601M1792.5 591V601M1793.5 591V601M1794.5 591V601M1795.5 591V601M1796.5 591V601M1797.5 591V601M1798.5 591V601M1799.5 591V601M1800.5 591V601M1801.5 591V601M1802.5 591V601M1803.5 591V601M1804.5 591V601M1805.5 591V602M1806.5 591V601M1807.5 591V602M1808.5 591V601M1809.5 591V601M1810.5 591V601M1811.5 591V601M1812.5 591V601M1813.5 591V601M1814.5 591V601M1815.5 591V601M1816.5 591V601M1817.5 591V602M1818.5 591V601M1819.5 591V601M1820.5 591V601M1821.5 591V601M1822.5 591V602M1823.5 591V601M1824.5 591V601M1825.5 591V601M1826.5 591V601M1827.5 591V601M1828.5 591V601M1829.5 591V601M1830.5 591V601M1831.5 591V601M1832.5 591V601M1833.5 591V601M1834.5 591V601M1835.5 591V601M1836.5 591V602M1837.5 591V602M1838.5 591V601M1839.5 591V601M1840.5 591V602M1841.5 591V601M1842.5 591V601M1843.5 591V601M1844.5 591V601M1845.5 591V601M1846.5 591V601M1847.5 591V601M1848.5 591V601M1849.5 591V601M1850.5 591V601M1851.5 591V601M1852.5 591V601M1853.5 591V601M1854.5 591V601M1855.5 591V601M1856.5 591V601M1857.5 591V602M1858.5 591V601M1859.5 591V601M1860.5 591V601M1861.5 591V601M1862.5 591V602M1863.5 591V601M1864.5 591V601M1865.5 591V601M1866.5 591V601M1867.5 591V602M1868.5 591V601M1869.5 591V602M1870.5 591V601M1871.5 591V601M1872.5 591V601M1873.5 591V601M1874.5 591V601M1875.5 591V601M1876.5 591V601M1877.5 591V601M1878.5 591V601M1879.5 591V602M1880.5 591V601M1881.5 591V601M1882.5 591V601M1883.5 591V601M1884.5 591V601M1885.5 591V602M1886.5 591V601M1887.5 591V601M1888.5 591V601M1889.5 591V601M1890.5 591V601M1891.5 591V601M1892.5 591V601M1893.5 591V602M1894.5 591V602M1895.5 591V601M1896.5 591V601M1897.5 591V601M1898.5 591V601M1899.5 591V601M1900.5 591V601" stroke="#e00000" stroke-width="1" fill="none" shape-rendering="crispEdges"/><rect x="91" y="806" width="639" height="2" fill="#a0ffff" shape-rendering="crispEdges" /><rect x="730" y="708" width="1" height="100" fill="#a0ffff" shape-rendering="crispEdges" /><path d="M731.5 708V720M732.5 708V720M733.5 708V720M734.5 708V720M735.5 708V720M736.5 708V721M737.5 708V721M738.5 708V720M739.5 708V728M740.5 708V721M741.5 708V721M742.5 708V722M743.5 708V722M744.5 708V726M745.5 708V721M746.5 708V722M747.5 708V721M748.5 708V722M749.5 708V722M750.5 708V722M751.5 708V721M752.5 708V722M753.5 708V722M754.5 708V722M755.5 708V722M756.5 708V722M757.5 708V722M758.5 708V722M759.5 708V723M760.5 708V722M761.5 708V723M762.5 708V723M763.5 708V724M764.5 708V723M765.5 708V724M766.5 708V724M767.5 708V724M768.5 708V723M769.5 708V723M770.5 708V724M771.5 708V724M772.5 708V724M773.5 708V724M774.5 708V724M775.5 708V724M776.5 708V724M777.5 708V724M778.5 708V724M779.5 708V725M780.5 708V724M781.5 708V725M782.5 708V725M783.5 708V725M784.5 708V725M785.5 708V726M786.5 708V725M787.5 708V725M788.5 708V726M789.5 708V726M790.5 708V725M791.5 708V725M792.5 708V725M793.5 708V726M794.5 708V726M795.5 708V726M796.5 708V726M797.5 708V727M798.5 708V727M799.5 708V727M800.5 708V727M801.5 708V727M802.5 708V726M803.5 708V727M804.5 708V727M805.5 708V727M806.5 708V728M807.5 708V727M808.5 708V734M809.5 708V727M810.5 708V728M811.5 708V728M812.5 708V728M813.5 708V728M814.5 708V728M815.5 708V728M816.5 708V732M817.5 708V728M818.5 708V728M819.5 708V729M820.5 708V728M821.5 708V728M822.5 708V728M823.5 708V729M824.5 708V729M825.5 708V729M826.5 708V728M827.5 708V729M828.5 708V729M829.5 708V730M830.5 708V729M831.5 708V730M832.5 708V729M833.5 708V729M834.5 708V730M835.5 708V730M836.5 708V729M837.5 708V729M838.5 708V730M839.5 708V730M840.5 708V730M841.5 708V730M842.5 708V730M843.5 708V730M844.5 708V730M845.5 708V730M846.5 708V731M847.5 708V737M848.5 708V730M849.5 708V731M850.5 708V731M851.5 708V732M852.5 708V732M853.5 708V732M854.5 708V731M855.5 708V732M856.5 708V732M857.5 708V731M858.5 708V732M859.5 708V732M860.5 708V731M861.5 708V732M862.5 708V732M863.5 708V732M864.5 708V732M865.5 708V732M866.5 708V732M867.5 708V732M868.5 708V732M869.5 708V732M870.5 708V737M871.5 708V732M872.5 708V738M873.5 708V732M874.5 708V733M875.5 708V732M876.5 708V732M877.5 708V733M878.5 708V733M879.5 708V733M880.5 708V732M881.5 711V737M882.5 708V743M883.5 710V741M884.5 713V741M885.5 712V740M886.5 708V746M887.5 708V738M888.5 711V741M889.5 715V749M890.5 708V739M891.5 710V741M892.5 716V753M893.5 718V753M894.5 718V742M895.5 720V749M896.5 714V746M897.5 721V749M898.5 722V758M899.5 722V752M900.5 718V755M901.5 715V761M902.5 723V749M903.5 725V752M904.5 719V751M905.5 724V752M906.5 725V758M907.5 717V756M908.5 724V753M909.5 727V760M910.5 726V756M911.5 725V754M912.5 724V768M913.5 721V756M914.5 733V766M915.5 728V766M916.5 723V758M917.5 734V759M918.5 735V760M919.5 734V765M920.5 732V761M921.5 726V761M922.5 730V760M923.5 737V760M924.5 728V763M925.5 731V763M926.5 734V764M927.5 738V770M928.5 731V762M929.5 729V765M930.5 740V763M931.5 740V777M932.5 734V774M933.5 739V772M934.5 736V777M935.5 741V767M936.5 743V772M937.5 741V769M938.5 742V776M939.5 742V768M940.5 742V777M941.5 736V773M942.5 744V776M943.5 740V771M944.5 745V780M945.5 745V777M946.5 741V781M947.5 744V771M948.5 738V778M949.5 736V776M950.5 746V782M951.5 747V783M952.5 738V781M953.5 740V774M954.5 742V774M955.5 742V773M956.5 739V777M957.5 748V785M958.5 744V783M959.5 747V785M960.5 744V775M961.5 750V774M962.5 748V781M963.5 750V775M964.5 750V776M965.5 742V775M966.5 750V774M967.5 745V781M968.5 742V775M969.5 742V781M970.5 747V783M971.5 751V777M972.5 745V788M973.5 747V777M974.5 750V778M975.5 743V775M976.5 745V787M977.5 753V778M978.5 753V776M979.5 753V780M980.5 751V785M981.5 749V776M982.5 752V785M983.5 745V784M984.5 750V789M985.5 753V778M986.5 754V779M987.5 753V782M988.5 754V791M989.5 747V782M990.5 746V777M991.5 745V780M992.5 751V785M993.5 754V783M994.5 755V779M995.5 746V785M996.5 755V779M997.5 757V788M998.5 746V779M999.5 747V783M1000.5 748V779M1001.5 749V789M1002.5 747V791M1003.5 748V781M1004.5 756V789M1005.5 751V779M1006.5 758V786M1007.5 746V790M1008.5 758V780M1009.5 748V780M1010.5 756V791M1011.5 758V788M1012.5 757V784M1013.5 748V789M1014.5 750V787M1015.5 758V790M1016.5 754V791M1017.5 757V781M1018.5 748V793M1019.5 754V780M1020.5 754V780M1021.5 753V782M1022.5 749V791M1023.5 756V790M1024.5 749V781M1025.5 755V789M1026.5 750V782M1027.5 748V792M1028.5 751V787M1029.5 758V785M1030.5 759V781M1031.5 758V780M1032.5 757V782M1033.5 753V786M1034.5 760V788M1035.5 748V788M1036.5 748V782M1037.5 753V782M1038.5 755V785M1039.5 759V782M1040.5 759V784M1041.5 759V790M1042.5 750V790M1043.5 759V783M1044.5 760V792M1045.5 758V782M1046.5 760V788M1047.5 760V794M1048.5 751V785M1049.5 757V783M1050.5 761V787M1051.5 757V793M1052.5 760V782M1053.5 761V789M1054.5 759V783M1055.5 759V788M1056.5 755V784M1057.5 760V788M1058.5 752V791M1059.5 758V784M1060.5 751V793M1061.5 762V794M1062.5 760V788M1063.5 754V790M1064.5 755V787M1065.5 762V789M1066.5 760V783M1067.5 755V789M1068.5 755V783M1069.5 753V789M1070.5 757V793M1071.5 756V783M1072.5 762V782M1073.5 754V783M1074.5 762V792M1075.5 758V784M1076.5 759V790M1077.5 750V790M1078.5 760V785M1079.5 760V782M1080.5 762V785M1081.5 756V783M1082.5 760V794M1083.5 756V784M1084.5 760V787M1085.5 755V790M1086.5 761V795M1087.5 757V784M1088.5 754V783M1089.5 755V785M1090.5 761V785M1091.5 755V796M1092.5 756V783M1093.5 760V788M1094.5 753V785M1095.5 760V787M1096.5 762V793M1097.5 761V783M1098.5 762V787M1099.5 760V787M1100.5 757V788M1101.5 762V785M1102.5 752V795M1103.5 756V789M1104.5 752V790M1105.5 755V785M1106.5 752V788M1107.5 763V788M1108.5 753V785M1109.5 754V789M1110.5 762V790M1111.5 761V796M1112.5 762V789M1113.5 761V795M1114.5 761V790M1115.5 753V789M1116.5 757V789M1117.5 761V784M1118.5 756V787M1119.5 752V790M1120.5 762V791M1121.5 756V785M1122.5 755V790M1123.5 754V794M1124.5 760V790M1125.5 755V796M1126.5 755V786M1127.5 758V791M1128.5 753V793M1129.5 759V786M1130.5 754V792M1131.5 762V795M1132.5 758V785M1133.5 752V786M1134.5 763V795M1135.5 763V794M1136.5 752V791M1137.5 752V797M1138.5 762V786M1139.5 763V786M1140.5 756V784M1141.5 761V795M1142.5 754V785M1143.5 763V785M1144.5 752V784M1145.5 764V796M1146.5 763V789M1147.5 763V786M1148.5 752V797M1149.5 758V791M1150.5 764V784M1151.5 758V785M1152.5 757V786M1153.5 763V789M1154.5 761V798M1155.5 760V795M1156.5 758V788M1157.5 757V785M1158.5 753V797M1159.5 754V790M1160.5 754V785M1161.5 753V792M1162.5 757V786M1163.5 756V791M1164.5 763V787M1165.5 755V798M1166.5 758V786M1167.5 763V797M1168.5 755V797M1169.5 755V790M1170.5 764V792M1171.5 759V786M1172.5 756V790M1173.5 762V784M1174.5 759V797M1175.5 759V797M1176.5 760V784M1177.5 763V790M1178.5 762V797M1179.5 762V786M1180.5 758V789M1181.5 760V785M1182.5 755V798M1183.5 763V799M1184.5 757V789M1185.5 753V793M1186.5 757V791M1187.5 762V786M1188.5 762V786M1189.5 763V792M1190.5 762V792M1191.5 764V789M1192.5 759V797M1193.5 755V785M1194.5 759V786M1195.5 762V798M1196.5 763V798M1197.5 759V788M1198.5 762V795M1199.5 765V792M1200.5 754V791M1201.5 762V795M1202.5 762V787M1203.5 764V787M1204.5 762V786M1205.5 756V796M1206.5 764V791M1207.5 755V787M1208.5 755V799M1209.5 756V798M1210.5 758V796M1211.5 759V793M1212.5 760V785M1213.5 764V791M1214.5 756V798M1215.5 756V786M1216.5 764V793M1217.5 764V787M1218.5 764V790M1219.5 758V788M1220.5 755V790M1221.5 764V790M1222.5 764V787M1223.5 762V787M1224.5 764V799M1225.5 765V790M1226.5 757V787M1227.5 758V790M1228.5 764V787M1229.5 757V794M1230.5 763V788M1231.5 764V793M1232.5 762V788M1233.5 764V790M1234.5 754V788M1235.5 764V786M1236.5 765V786M1237.5 765V793M1238.5 761V790M1239.5 760V788M1240.5 757V795M1241.5 759V786M1242.5 763V797M1243.5 763V791M1244.5 763V788M1245.5 761V793M1246.5 761V787M1247.5 755V792M1248.5 761V797M1249.5 763V796M1250.5 754V788M1251.5 760V786M1252.5 763V796M1253.5 765V788M1254.5 761V792M1255.5 760V786M1256.5 757V791M1257.5 756V787M1258.5 763V800M1259.5 755V786M1260.5 765V786M1261.5 765V790M1262.5 756V796M1263.5 759V792M1264.5 765V789M1265.5 758V795M1266.5 760V798M1267.5 763V787M1268.5 763V798M1269.5 765V795M1270.5 763V790M1271.5 765V794M1272.5 754V787M1273.5 764V792M1274.5 764V794M1275.5 764V795M1276.5 757V791M1277.5 763V790M1278.5 756V791M1279.5 759V792M1280.5 765V795M1281.5 754V786M1282.5 761V796M1283.5 765V795M1284.5 754V788M1285.5 760V788M1286.5 757V794M1287.5 754V787M1288.5 763V787M1289.5 761V787M1290.5 764V796M1291.5 764V787M1292.5 759V788M1293.5 763V794M1294.5 760V788M1295.5 764V789M1296.5 759V797M1297.5 764V792M1298.5 765V793M1299.5 764V797M1300.5 763V789M1301.5 764V797M1302.5 756V788M1303.5 765V790M1304.5 761V792M1305.5 758V799M1306.5 757V796M1307.5 765V786M1308.5 766V788M1309.5 764V799M1310.5 766V788M1311.5 763V788M1312.5 755V796M1313.5 765V787M1314.5 764V790M1315.5 756V787M1316.5 760V787M1317.5 760V791M1318.5 759V798M1319.5 764V793M1320.5 764V794M1321.5 759V796M1322.5 764V795M1323.5 765V787M1324.5 764V789M1325.5 761V788M1326.5 757V799M1327.5 758V789M1328.5 764V796M1329.5 764V789M1330.5 760V789M1331.5 758V791M1332.5 759V794M1333.5 766V794M1334.5 764V788M1335.5 764V791M1336.5 762V798M1337.5 765V787M1338.5 761V787M1339.5 756V800M1340.5 765V794M1341.5 765V799M1342.5 758V788M1343.5 764V789M1344.5 761V799M1345.5 764V787M1346.5 756V787M1347.5 766V796M1348.5 755V788M1349.5 758V797M1350.5 762V789M1351.5 762V789M1352.5 762V787M1353.5 761V800M1354.5 759V796M1355.5 757V796M1356.5 758V795M1357.5 764V791M1358.5 761V796M1359.5 766V792M1360.5 764V787M1361.5 766V789M1362.5 760V794M1363.5 764V797M1364.5 766V793M1365.5 766V796M1366.5 761V789M1367.5 759V789M1368.5 761V798M1369.5 757V788M1370.5 764V789M1371.5 755V793M1372.5 761V801M1373.5 765V788M1374.5 764V792M1375.5 762V800M1376.5 761V789M1377.5 756V790M1378.5 760V788M1379.5 761V795M1380.5 764V790M1381.5 761V794M1382.5 765V787M1383.5 755V789M1384.5 765V792M1385.5 757V794M1386.5 758V800M1387.5 758V798M1388.5 756V795M1389.5 759V789M1390.5 759V794M1391.5 758V799M1392.5 766V789M1393.5 764V800M1394.5 765V789M1395.5 760V794M1396.5 760V796M1397.5 758V787M1398.5 756V795M1399.5 755V800M1400.5 764V801M1401.5 755V792M1402.5 759V793M1403.5 765V789M1404.5 757V791M1405.5 767V800M1406.5 765V794M1407.5 766V794M1408.5 764V798M1409.5 756V801M1410.5 762V790M1411.5 764V788M1412.5 759V795M1413.5 765V792M1414.5 762V789M1415.5 759V798M1416.5 761V798M1417.5 755V798M1418.5 765V790M1419.5 755V801M1420.5 766V794M1421.5 765V790M1422.5 766V799M1423.5 758V794M1424.5 764V794M1425.5 764V799M1426.5 759V801M1427.5 763V795M1428.5 760V797M1429.5 764V795M1430.5 762V794M1431.5 757V788M1432.5 756V789M1433.5 765V798M1434.5 759V791M1435.5 766V793M1436.5 765V799M1437.5 766V789M1438.5 758V796M1439.5 760V793M1440.5 764V789M1441.5 766V794M1442.5 761V799M1443.5 757V801M1444.5 764V789M1445.5 758V792M1446.5 756V792M1447.5 764V789M1448.5 765V798M1449.5 755V796M1450.5 760V789M1451.5 761V795M1452.5 762V789M1453.5 765V795M1454.5 758V790M1455.5 761V794M1456.5 765V799M1457.5 766V793M1458.5 767V792M1459.5 761V799M1460.5 756V800M1461.5 760V798M1462.5 764V801M1463.5 757V801M1464.5 756V796M1465.5 756V795M1466.5 755V793M1467.5 766V793M1468.5 762V789M1469.5 767V789M1470.5 763V788M1471.5 760V798M1472.5 762V796M1473.5 764V789M1474.5 765V799M1475.5 758V793M1476.5 757V797M1477.5 764V788M1478.5 767V794M1479.5 756V797M1480.5 764V797M1481.5 761V793M1482.5 758V790M1483.5 764V799M1484.5 767V788M1485.5 766V797M1486.5 766V799M1487.5 756V790M1488.5 765V800M1489.5 757V797M1490.5 766V790M1491.5 762V797M1492.5 767V792M1493.5 765V799M1494.5 765V800M1495.5 758V799M1496.5 766V794M1497.5 757V793M1498.5 766V797M1499.5 767V794M1500.5 758V795M1501.5 765V798M1502.5 765V789M1503.5 765V795M1504.5 765V793M1505.5 766V797M1506.5 765V800M1507.5 767V800M1508.5 762V799M1509.5 765V789M1510.5 760V800M1511.5 765V795M1512.5 766V790M1513.5 765V793M1514.5 766V793M1515.5 765V797M1516.5 762V793M1517.5 761V797M1518.5 767V801M1519.5 761V789M1520.5 759V797M1521.5 767V801M1522.5 760V793M1523.5 757V789M1524.5 762V790M1525.5 758V798M1526.5 763V788M1527.5 767V790M1528.5 765V790M1529.5 756V800M1530.5 765V799M1531.5 763V796M1532.5 760V790M1533.5 762V801M1534.5 762V795M1535.5 765V788M1536.5 762V794M1537.5 762V793M1538.5 765V788M1539.5 759V788M1540.5 767V789M1541.5 767V790M1542.5 763V788M1543.5 758V788M1544.5 767V792M1545.5 766V796M1546.5 767V793M1547.5 758V796M1548.5 765V791M1549.5 765V789M1550.5 766V790M1551.5 758V790M1552.5 766V790M1553.5 766V796M1554.5 762V795M1555.5 766V789M1556.5 761V801M1557.5 763V798M1558.5 757V788M1559.5 757V794M1560.5 765V795M1561.5 765V789M1562.5 767V794M1563.5 766V797M1564.5 758V796M1565.5 760V789M1566.5 768V793M1567.5 756V792M1568.5 757V789M1569.5 764V791M1570.5 762V795M1571.5 768V790M1572.5 760V794M1573.5 762V790M1574.5 762V790M1575.5 767V797M1576.5 759V794M1577.5 766V792M1578.5 768V790M1579.5 764V789M1580.5 761V790M1581.5 766V794M1582.5 757V793M1583.5 763V799M1584.5 766V793M1585.5 767V790M1586.5 760V801M1587.5 760V789M1588.5 768V790M1589.5 759V799M1590.5 761V797M1591.5 766V788M1592.5 756V798M1593.5 762V790M1594.5 761V789M1595.5 757V802M1596.5 765V791M1597.5 766V801M1598.5 761V790M1599.5 764V790M1600.5 766V799M1601.5 765V798M1602.5 761V788M1603.5 764V796M1604.5 759V789M1605.5 754V786M1606.5 758V788M1607.5 756V792M1608.5 763V794M1609.5 756V795M1610.5 755V786M1611.5 751V795M1612.5 750V782M1613.5 756V792M1614.5 755V783M1615.5 753V789M1616.5 757V781M1617.5 754V781M1618.5 756V788M1619.5 750V781M1620.5 746V789M1621.5 755V778M1622.5 744V790M1623.5 748V777M1624.5 752V788M1625.5 743V787M1626.5 751V775M1627.5 750V777M1628.5 741V775M1629.5 741V772M1630.5 745V780M1631.5 744V784M1632.5 744V772M1633.5 737V773M1634.5 747V777M1635.5 744V781M1636.5 743V772M1637.5 745V771M1638.5 738V766M1639.5 742V766M1640.5 740V765M1641.5 741V766M1642.5 734V765M1643.5 741V771M1644.5 734V762M1645.5 735V768M1646.5 730V761M1647.5 730V773M1648.5 733V761M1649.5 735V766M1650.5 734V758M1651.5 727V771M1652.5 735V768M1653.5 734V767M1654.5 732V768M1655.5 734V755M1656.5 727V756M1657.5 723V753M1658.5 732V757M1659.5 732V758M1660.5 724V764M1661.5 728V757M1662.5 729V762M1663.5 726V758M1664.5 720V755M1665.5 716V762M1666.5 724V750M1667.5 720V756M1668.5 716V747M1669.5 714V746M1670.5 714V747M1671.5 716V747M1672.5 720V750M1673.5 720V757M1674.5 710V748M1675.5 719V748M1676.5 713V752M1677.5 714V753M1678.5 719V742M1679.5 718V750M1680.5 717V746M1681.5 711V743M1682.5 717V750M1683.5 713V744M1684.5 708V743M1685.5 712V745M1686.5 716V741M1687.5 711V745M1688.5 708V743M1689.5 710V740M1690.5 714V733M1691.5 713V740M1692.5 708V737M1693.5 712V731M1694.5 711V738M1695.5 712V730M1696.5 708V732M1697.5 711V739M1698.5 708V734M1699.5 709V743M1700.5 708V732M1701.5 708V732M1702.5 708V732M1703.5 708V732M1704.5 708V732M1705.5 708V731M1706.5 708V738M1707.5 708V732M1708.5 708V732M1709.5 708V732M1710.5 708V732M1711.5 708V732M1712.5 708V732M1713.5 708V733M1714.5 708V732M1715.5 708V733M1716.5 708V732M1717.5 708V732M1718.5 708V732M1719.5 708V737M1720.5 708V732M1721.5 708V732M1722.5 708V743M1723.5 708V732M1724.5 708V731M1725.5 708V731M1726.5 708V731M1727.5 708V731M1728.5 708V731M1729.5 708V731M1730.5 708V731M1731.5 708V731M1732.5 708V730M1733.5 708V730M1734.5 708V730M1735.5 708V730M1736.5 708V730M1737.5 708V730M1738.5 708V729M1739.5 708V729M1740.5 708V730M1741.5 708V728M1742.5 708V728M1743.5 708V728M1744.5 708V727M1745.5 708V727M1746.5 708V726M1747.5 708V726M1748.5 708V725M1749.5 708V724M1750.5 708V725M1751.5 708V724M1752.5 708V724M1753.5 708V724M1754.5 708V723M1755.5 708V723M1756.5 708V722M1757.5 708V722M1758.5 708V720M1759.5 708V720M1760.5 708V720M1761.5 708V720M1762.5 708V719M1763.5 708V720M1764.5 708V720M1765.5 708V720M1766.5 708V719M1767.5 708V719M1768.5 708V719M1769.5 708V720M1770.5 708V719M1771.5 708V719M1772.5 708V719M1773.5 708V719M1774.5 708V718M1775.5 708V718M1776.5 708V718M1777.5 708V719M1778.5 708V718M1779.5 708V718M1780.5 708V718M1781.5 708V718M1782.5 708V718M1783.5 708V718M1784.5 708V718M1785.5 708V719M1786.5 708V718M1787.5 708V718M1788.5 708V718M1789.5 708V718M1790.5 708V717M1791.5 708V718M1792.5 708V718M1793.5 708V718M1794.5 708V718M1795.5 708V718M1796.5 708V718M1797.5 708V719M1798.5 708V718M1799.5 708V718M1800.5 708V718M1801.5 708V717M1802.5 708V718M1803.5 708V718M1804.5 708V718M1805.5 708V718M1806.5 708V718M1807.5 708V718M1808.5 708V717M1809.5 708V718M1810.5 708V718M1811.5 708V719M1812.5 708V718M1813.5 708V718M1814.5 708V718M1815.5 708V719M1816.5 708V719M1817.5 708V718M1818.5 708V718M1819.5 708V717M1820.5 708V718M1821.5 708V718M1822.5 708V718M1823.5 708V718M1824.5 708V718M1825.5 708V718M1826.5 708V719M1827.5 708V718M1828.5 708V718M1829.5 708V718M1830.5 708V718M1831.5 708V718M1832.5 708V718M1833.5 708V718M1834.5 708V718M1835.5 708V717M1836.5 708V718M1837.5 708V718M1838.5 708V718M1839.5 708V718M1840.5 708V717M1841.5 708V718M1842.5 708V718M1843.5 708V717M1844.5 708V719M1845.5 708V718M1846.5 708V718M1847.5 708V718M1848.5 708V718M1849.5 708V718M1850.5 708V717M1851.5 708V718M1852.5 708V719M1853.5 708V718M1854.5 708V718M1855.5 708V718M1856.5 708V718M1857.5 708V718M1858.5 708V718M1859.5 708V718M1860.5 708V718M1861.5 708V718M1862.5 708V718M1863.5 708V718M1864.5 708V718M1865.5 708V718M1866.5 708V719M1867.5 708V718M1868.5 708V718M1869.5 708V718M1870.5 708V718M1871.5 708V718M1872.5 708V718M1873.5 708V718M1874.5 708V718M1875.5 708V718M1876.5 708V718M1877.5 708V719M1878.5 708V717M1879.5 708V718M1880.5 708V719M1881.5 708V718M1882.5 708V718M1883.5 708V718M1884.5 708V718M1885.5 708V718M1886.5 708V718M1887.5 708V718M1888.5 708V718M1889.5 708V717M1890.5 708V718M1891.5 708V718M1892.5 708V718M1893.5 708V718M1894.5 708V718M1895.5 708V717M1896.5 708V719M1897.5 708V718M1898.5 708V718M1899.5 708V718M1900.5 708V718" stroke="#80ffff" stroke-width="1" fill="none" shape-rendering="crispEdges"/><path d="M703 88L730 103M703 115L730 145M703 232L730 245M695 469L730 483M695 552.5L730 567.5M653 675L692 690M675 793L718 807" stroke="#fff" stroke-width="1" fill="none"/><path d="M78 100H88V102H80V103.5H78Z" fill="#00ffff"/><path d="M90 102L95.5 107.5H90Z" fill="#fff"/><path d="M78 208H88V210H80V211.5H78Z" fill="#8080ff"/><path d="M90 144L95.5 149.5H90Z" fill="#fff"/><path d="M78 310H88V312H80V313.5H78Z" fill="#ff66cc"/><path d="M90 244L95.5 249.5H90Z" fill="#fff"/><path d="M78 380H88V382H80V383.5H78Z" fill="#e0e0e0"/><path d="M90 371L95.5 376.5H90Z" fill="#fff"/><path d="M78 480H88V482H80V483.5H78Z" fill="#ffff00"/><path d="M90 482L95.5 487.5H90Z" fill="#fff"/><path d="M78 568H88V570H80V571.5H78Z" fill="#00c800"/><path d="M90 569L95.5 574.5H90Z" fill="#fff"/><path d="M78 689H88V691H80V692.5H78Z" fill="#ff0000"/><path d="M90 689L95.5 694.5H90Z" fill="#fff"/><path d="M78 806H88V808H80V809.5H78Z" fill="#a0ffff"/><path d="M90 806L95.5 811.5H90Z" fill="#fff"/><path d="M69 675H87L88 676V687L87 688H69L68 687V676Z" fill="#ff0000"/><path d="M1895 96H1902V103Z" fill="#fff"/><rect x="1900" y="86" width="2" height="17" fill="#fff"/><path d="M1895 135H1902V142Z" fill="#fff"/><rect x="1900" y="125" width="2" height="17" fill="#fff"/><path d="M1895 237H1902V244Z" fill="#fff"/><rect x="1900" y="227" width="2" height="17" fill="#fff"/><path d="M1895 308H1902V315Z" fill="#fff"/><rect x="1900" y="298" width="2" height="17" fill="#fff"/><path d="M1895 409H1902V416Z" fill="#fff"/><rect x="1900" y="399" width="2" height="17" fill="#fff"/><path d="M1895 502H1902V509Z" fill="#fff"/><rect x="1900" y="492" width="2" height="17" fill="#fff"/><path d="M1895 586H1902V593Z" fill="#fff"/><rect x="1900" y="576" width="2" height="17" fill="#fff"/><path d="M1895 708H1902V715Z" fill="#fff"/><rect x="1900" y="698" width="2" height="17" fill="#fff"/><path d="M1902 341L1910 337V345Z" fill="#c0c0c0"/><path d="M730.5 839L734 846H727Z" fill="#fff"/><rect x="93" y="824" width="18" height="10" fill="#fff"/><rect x="96" y="826" width="4" height="6" fill="#223"/><rect x="101" y="825" width="1" height="8" fill="#36c"/><rect x="1878" y="824" width="20" height="10" fill="#fff"/><rect x="1881" y="826" width="4" height="6" fill="#223"/><rect x="1887" y="825" width="1" height="8" fill="#36c"/></svg><div class="t" style="right:1836.5px;top:48.91px;font-size:14.7px;line-height:18px;color:#ff0000;">6.495 A</div><div class="t" style="right:1836.5px;top:137.91px;font-size:14.7px;line-height:18px;color:#ff0000;">5.495 A</div><div class="t" style="right:1836.5px;top:237.91px;font-size:14.7px;line-height:18px;color:#ff0000;">4.495 A</div><div class="t" style="right:1836.5px;top:336.91px;font-size:14.7px;line-height:18px;color:#ff0000;">3.495 A</div><div class="t" style="right:1836.5px;top:435.91px;font-size:14.7px;line-height:18px;color:#ff0000;">2.495 A</div><div class="t" style="right:1836.5px;top:534.91px;font-size:14.7px;line-height:18px;color:#ff0000;">1.495 A</div><div class="t" style="right:1836.5px;top:633.91px;font-size:14.7px;line-height:18px;color:#ff0000;">495 mA</div><div class="t" style="right:1836.5px;top:732.91px;font-size:14.7px;line-height:18px;color:#ff0000;">-505 mA</div><div class="t" style="right:1836.5px;top:820.91px;font-size:14.7px;line-height:18px;color:#ff0000;">-1.505 A</div><div class="t" style="left:89px;top:840.98px;font-size:14.5px;line-height:18px;color:#ff0000;">-708 ms</div><div class="t" style="left:119.39999999999998px;width:300px;text-align:center;top:840.98px;font-size:14.5px;line-height:18px;color:#ff0000;">-508 ms</div><div class="t" style="left:300.8px;width:300px;text-align:center;top:840.98px;font-size:14.5px;line-height:18px;color:#ff0000;">-308 ms</div><div class="t" style="left:482.20000000000005px;width:300px;text-align:center;top:840.98px;font-size:14.5px;line-height:18px;color:#ff0000;">-108 ms</div><div class="t" style="left:663.6px;width:300px;text-align:center;top:840.98px;font-size:14.5px;line-height:18px;color:#ff0000;">92 ms</div><div class="t" style="left:845.0px;width:300px;text-align:center;top:840.98px;font-size:14.5px;line-height:18px;color:#ff0000;">292 ms</div><div class="t" style="left:1026.4px;width:300px;text-align:center;top:840.98px;font-size:14.5px;line-height:18px;color:#ff0000;">492 ms</div><div class="t" style="left:1207.8px;width:300px;text-align:center;top:840.98px;font-size:14.5px;line-height:18px;color:#ff0000;">692 ms</div><div class="t" style="left:1389.2px;width:300px;text-align:center;top:840.98px;font-size:14.5px;line-height:18px;color:#ff0000;">892 ms</div><div class="t" style="left:1570.6000000000001px;width:300px;text-align:center;top:840.98px;font-size:14.5px;line-height:18px;color:#ff0000;">1.092 s</div><div class="t" style="right:18px;top:840.98px;font-size:14.5px;line-height:18px;color:#ff0000;">1.292 s</div><div class="t" style="right:1833px;top:86.86px;font-size:10.5px;line-height:13px;color:#00ffff;">C3</div><div class="t" style="right:1833px;top:194.86px;font-size:10.5px;line-height:13px;color:#7070ff;">C6</div><div class="t" style="right:1833px;top:295.86px;font-size:10.5px;line-height:13px;color:#ff66cc;">C2</div><div class="t" style="right:1833px;top:366.86px;font-size:10.5px;line-height:13px;color:#e8e8e8;">C5</div><div class="t" style="right:1833px;top:466.36px;font-size:10.5px;line-height:13px;color:#ffff00;">C1</div><div class="t" style="right:1833px;top:554.36px;font-size:10.5px;line-height:13px;color:#00c000;">C4</div><div class="t" style="right:1833px;top:676.36px;font-size:10.5px;line-height:13px;color:#000;">C7</div><div class="t" style="right:1833px;top:792.86px;font-size:10.5px;line-height:13px;color:#a0ffff;">M7</div><div class="t" style="left:686px;top:71.65px;font-size:14px;line-height:17px;color:#fff;text-decoration:underline">AIN1</div><div class="t" style="left:686px;top:97.65px;font-size:14px;line-height:17px;color:#fff;text-decoration:underline">AIN2</div><div class="t" style="left:686px;top:212.65px;font-size:14px;line-height:17px;color:#fff;text-decoration:underline">BIN2</div><div class="t" style="left:671px;top:450.65px;font-size:14px;line-height:17px;color:#fff;text-decoration:underline">AOUT2</div><div class="t" style="left:671px;top:535.65px;font-size:14px;line-height:17px;color:#fff;text-decoration:underline">BOUT2</div><div class="t" style="left:624px;top:657.65px;font-size:14px;line-height:17px;color:#fff;text-decoration:underline">I-BOUT2</div><div class="t" style="left:642px;top:775.65px;font-size:14px;line-height:17px;color:#fff;text-decoration:underline">I-AOUT12</div><div class="t" style="left:674px;top:295.65px;font-size:14px;line-height:17px;color:#fff;">nSLEEP</div><div class="t" style="left:5px;top:877.96px;font-size:16px;line-height:20px;color:#fff;font-weight:bold;">Measure</div><div class="a" style="left:3px;top:897px;width:1899px;height:1px;background:#6a6a6a"></div><div class="a" style="left:3px;top:898px;width:1899px;height:19px;background:#1c1c1c"></div><div class="t" style="left:5px;top:897.96px;font-size:16px;line-height:20px;color:#fff;">value</div><div class="t" style="left:5px;top:917.96px;font-size:16px;line-height:20px;color:#fff;">status</div><div class="t" style="right:1626px;top:877.96px;font-size:16px;line-height:20px;color:#fff;">P1:max(C1)</div><div class="t" style="right:1626px;top:897.96px;font-size:16px;line-height:20px;color:#fff;">7.92 V</div><svg class="a" style="left:282px;top:922px" width="12" height="11"><path d="M2.3 6 L5 8.8 L10.8 2.3" stroke="#00ff00" stroke-width="2.5" fill="none" stroke-linecap="round"/></svg><div class="t" style="right:1480px;top:877.96px;font-size:16px;line-height:20px;color:#fff;">P2:top(C2)</div><div class="t" style="right:1480px;top:897.96px;font-size:16px;line-height:20px;color:#fff;">3.34 V</div><svg class="a" style="left:428px;top:921px" width="12" height="12" shape-rendering="crispEdges"><path d="M1 1h1v1H1zM2 2h1v1H2zM3 3h1v1H3zM10 1h1v1h-1zM9 2h1v1H9zM8 3h1v1H8zM1 10h1v1H1zM2 9h1v1H2zM10 10h1v1h-1zM9 9h1v1H9z" fill="#ffff00"/><path d="M4 2h4v1H4zM4 2h1v6H4zM7 2h1v6H7zM1 8h3v1H1zM8 8h3v1H8z" fill="#fff"/><rect x="5" y="5" width="2" height="3" fill="#ffff00"/></svg><div class="t" style="right:1334px;top:877.96px;font-size:16px;line-height:20px;color:#fff;">P3:max(C7)</div><div class="t" style="right:1334px;top:897.96px;font-size:16px;line-height:20px;color:#fff;">1.015 A</div><svg class="a" style="left:574px;top:922px" width="12" height="11"><path d="M2.3 6 L5 8.8 L10.8 2.3" stroke="#00ff00" stroke-width="2.5" fill="none" stroke-linecap="round"/></svg><div class="t" style="right:1188px;top:877.96px;font-size:16px;line-height:20px;color:#fff;">P4:mean(C7)</div><div class="t" style="right:1188px;top:897.96px;font-size:16px;line-height:20px;color:#fff;">872.4 mA</div><svg class="a" style="left:720px;top:922px" width="12" height="11"><path d="M2.3 6 L5 8.8 L10.8 2.3" stroke="#00ff00" stroke-width="2.5" fill="none" stroke-linecap="round"/></svg><div class="t" style="right:1042px;top:877.96px;font-size:16px;line-height:20px;color:#6e6e6e;">P5:top(C5)</div><div class="t" style="right:896px;top:877.96px;font-size:16px;line-height:20px;color:#fff;">P6:rms(C7)</div><div class="t" style="right:896px;top:897.96px;font-size:16px;line-height:20px;color:#fff;">345.6 mA</div><svg class="a" style="left:1012px;top:922px" width="12" height="11"><path d="M2.3 6 L5 8.8 L10.8 2.3" stroke="#00ff00" stroke-width="2.5" fill="none" stroke-linecap="round"/></svg><div class="t" style="right:750px;top:877.96px;font-size:16px;line-height:20px;color:#6e6e6e;">P7:slew(C1)</div><div class="t" style="right:604px;top:877.96px;font-size:16px;line-height:20px;color:#6e6e6e;">P8:slew(C1)</div><div class="t" style="right:458px;top:877.96px;font-size:16px;line-height:20px;color:#6e6e6e;">P9:freq@lv(C2)</div><div class="t" style="right:312px;top:877.96px;font-size:16px;line-height:20px;color:#6e6e6e;">P10:rise(C5)</div><div class="t" style="right:165px;top:877.96px;font-size:16px;line-height:20px;color:#6e6e6e;">P11:fall(C5)</div><div class="t" style="right:19px;top:877.96px;font-size:16px;line-height:20px;color:#6e6e6e;">P12:freq(C4)</div><div class="a" style="left:4px;top:938px;width:122px;height:118px;background:#434343"></div><div class="a" style="left:4px;top:938px;width:122px;height:20px;background:#ffff00"></div><div class="t" style="left:8px;top:939.3px;font-size:15px;line-height:18px;color:#000;">C1</div><div class="tag" style="left:77px;top:939px;width:46px;height:18px;font-size:14.5px;line-height:18px;color:#ffff00">DC1M</div><div class="tag" style="left:45px;top:939px;width:31px;height:18px;font-size:14.5px;line-height:18px;color:#ffff00">FLT</div><div class="t" style="right:1796px;top:958.96px;font-size:16px;line-height:20px;color:#fff;">10.0 V/div</div><div class="t" style="right:1796px;top:976.96px;font-size:16px;line-height:20px;color:#fff;">-3.8000 V</div><div class="t" style="right:1796px;top:1000.46px;font-size:16px;line-height:20px;color:#fff;">6.5485 V</div><div class="t" style="right:1796px;top:1018.46px;font-size:16px;line-height:20px;color:#fff;">-97.7 mV</div><div class="t" style="right:1796px;top:1036.46px;font-size:16px;line-height:20px;color:#fff;">-6.6462 V</div><svg class="a" style="left:7px;top:1004px" width="10" height="34"><path d="M4.5 1V13M1.5 10L4.5 14L7.5 10M4.5 20V33M1.5 23L4.5 19L7.5 23" stroke="#fff" stroke-width="1.3" fill="none"/></svg><svg class="a" style="left:6px;top:1037px" width="14" height="15"><path d="M1.2 13.3L6.5 1.3L11.8 13.3Z" fill="none" stroke="#fff" stroke-width="1.5" stroke-linejoin="miter"/></svg><div class="a" style="left:129px;top:938px;width:122px;height:118px;background:#434343"></div><div class="a" style="left:129px;top:938px;width:122px;height:20px;background:#ff66cc"></div><div class="t" style="left:133px;top:939.3px;font-size:15px;line-height:18px;color:#000;">C2</div><div class="tag" style="left:202px;top:939px;width:46px;height:18px;font-size:14.5px;line-height:18px;color:#ff66cc">DC1M</div><div class="tag" style="left:170px;top:939px;width:31px;height:18px;font-size:14.5px;line-height:18px;color:#ff66cc">FLT</div><div class="t" style="right:1671px;top:958.96px;font-size:16px;line-height:20px;color:#fff;">5.00 V/div</div><div class="t" style="right:1671px;top:976.96px;font-size:16px;line-height:20px;color:#fff;">6.7500 V ofst</div><div class="t" style="right:1671px;top:1000.46px;font-size:16px;line-height:20px;color:#fff;">3.2910 V</div><div class="t" style="right:1671px;top:1018.46px;font-size:16px;line-height:20px;color:#fff;">3.3022 V</div><div class="t" style="right:1671px;top:1036.46px;font-size:16px;line-height:20px;color:#fff;">11.2 mV</div><svg class="a" style="left:132px;top:1004px" width="10" height="34"><path d="M4.5 1V13M1.5 10L4.5 14L7.5 10M4.5 20V33M1.5 23L4.5 19L7.5 23" stroke="#fff" stroke-width="1.3" fill="none"/></svg><svg class="a" style="left:131px;top:1037px" width="14" height="15"><path d="M1.2 13.3L6.5 1.3L11.8 13.3Z" fill="none" stroke="#fff" stroke-width="1.5" stroke-linejoin="miter"/></svg><div class="a" style="left:254px;top:938px;width:122px;height:118px;background:#434343"></div><div class="a" style="left:254px;top:938px;width:122px;height:20px;background:#00ffff"></div><div class="t" style="left:258px;top:939.3px;font-size:15px;line-height:18px;color:#000;">C3</div><div class="tag" style="left:327px;top:939px;width:46px;height:18px;font-size:14.5px;line-height:18px;color:#00ffff">DC1M</div><div class="tag" style="left:295px;top:939px;width:31px;height:18px;font-size:14.5px;line-height:18px;color:#00ffff">FLT</div><div class="t" style="right:1546px;top:958.96px;font-size:16px;line-height:20px;color:#fff;">5.00 V/div</div><div class="t" style="right:1546px;top:976.96px;font-size:16px;line-height:20px;color:#fff;">17.3400 V</div><div class="t" style="right:1546px;top:1000.46px;font-size:16px;line-height:20px;color:#fff;">-112.3 mV</div><div class="t" style="right:1546px;top:1018.46px;font-size:16px;line-height:20px;color:#fff;">-106.7 mV</div><div class="t" style="right:1546px;top:1036.46px;font-size:16px;line-height:20px;color:#fff;">5.6 mV</div><svg class="a" style="left:257px;top:1004px" width="10" height="34"><path d="M4.5 1V13M1.5 10L4.5 14L7.5 10M4.5 20V33M1.5 23L4.5 19L7.5 23" stroke="#fff" stroke-width="1.3" fill="none"/></svg><svg class="a" style="left:256px;top:1037px" width="14" height="15"><path d="M1.2 13.3L6.5 1.3L11.8 13.3Z" fill="none" stroke="#fff" stroke-width="1.5" stroke-linejoin="miter"/></svg><div class="a" style="left:379px;top:938px;width:122px;height:118px;background:#434343"></div><div class="a" style="left:379px;top:938px;width:122px;height:20px;background:#00cc00"></div><div class="t" style="left:383px;top:939.3px;font-size:15px;line-height:18px;color:#000;">C4</div><div class="tag" style="left:452px;top:939px;width:46px;height:18px;font-size:14.5px;line-height:18px;color:#00cc00">DC1M</div><div class="tag" style="left:420px;top:939px;width:31px;height:18px;font-size:14.5px;line-height:18px;color:#00cc00">FLT</div><div class="t" style="right:1421px;top:958.96px;font-size:16px;line-height:20px;color:#fff;">10.0 V/div</div><div class="t" style="right:1421px;top:976.96px;font-size:16px;line-height:20px;color:#fff;">-12.6500 V</div><div class="t" style="right:1421px;top:1000.46px;font-size:16px;line-height:20px;color:#fff;">5.9975 V</div><div class="t" style="right:1421px;top:1018.46px;font-size:16px;line-height:20px;color:#fff;">-125.6 mV</div><div class="t" style="right:1421px;top:1036.46px;font-size:16px;line-height:20px;color:#fff;">-6.1230 V</div><svg class="a" style="left:382px;top:1004px" width="10" height="34"><path d="M4.5 1V13M1.5 10L4.5 14L7.5 10M4.5 20V33M1.5 23L4.5 19L7.5 23" stroke="#fff" stroke-width="1.3" fill="none"/></svg><svg class="a" style="left:381px;top:1037px" width="14" height="15"><path d="M1.2 13.3L6.5 1.3L11.8 13.3Z" fill="none" stroke="#fff" stroke-width="1.5" stroke-linejoin="miter"/></svg><div class="a" style="left:504px;top:938px;width:122px;height:118px;background:#434343"></div><div class="a" style="left:504px;top:938px;width:122px;height:20px;background:#e0e0e0"></div><div class="t" style="left:508px;top:939.3px;font-size:15px;line-height:18px;color:#000;">C5</div><div class="tag" style="left:598px;top:939px;width:25px;height:18px;font-size:14.5px;line-height:18px;color:#ffffff">D1</div><div class="tag" style="left:582px;top:939px;width:15px;height:18px;font-size:14.5px;line-height:18px;color:#ffffff">B</div><div class="tag" style="left:566px;top:939px;width:15px;height:18px;font-size:14.5px;line-height:18px;color:#ffffff">F</div><div class="t" style="right:1296px;top:958.96px;font-size:16px;line-height:20px;color:#fff;">5.00 V/div</div><div class="t" style="right:1296px;top:976.96px;font-size:16px;line-height:20px;color:#fff;">3.1500 V ofst</div><div class="t" style="right:1296px;top:1000.46px;font-size:16px;line-height:20px;color:#fff;">3.2931 V</div><div class="t" style="right:1296px;top:1018.46px;font-size:16px;line-height:20px;color:#fff;">482.7 mV</div><div class="t" style="right:1296px;top:1036.46px;font-size:16px;line-height:20px;color:#fff;">-2.8104 V</div><svg class="a" style="left:507px;top:1004px" width="10" height="34"><path d="M4.5 1V13M1.5 10L4.5 14L7.5 10M4.5 20V33M1.5 23L4.5 19L7.5 23" stroke="#fff" stroke-width="1.3" fill="none"/></svg><svg class="a" style="left:506px;top:1037px" width="14" height="15"><path d="M1.2 13.3L6.5 1.3L11.8 13.3Z" fill="none" stroke="#fff" stroke-width="1.5" stroke-linejoin="miter"/></svg><div class="a" style="left:629px;top:938px;width:122px;height:118px;background:#434343"></div><div class="a" style="left:629px;top:938px;width:122px;height:20px;background:#8080ff"></div><div class="t" style="left:633px;top:939.3px;font-size:15px;line-height:18px;color:#000;">C6</div><div class="tag" style="left:723px;top:939px;width:25px;height:18px;font-size:14.5px;line-height:18px;color:#8080ff">D1</div><div class="tag" style="left:707px;top:939px;width:15px;height:18px;font-size:14.5px;line-height:18px;color:#8080ff">B</div><div class="tag" style="left:691px;top:939px;width:15px;height:18px;font-size:14.5px;line-height:18px;color:#8080ff">F</div><div class="t" style="right:1171px;top:958.96px;font-size:16px;line-height:20px;color:#fff;">5.00 V/div</div><div class="t" style="right:1171px;top:976.96px;font-size:16px;line-height:20px;color:#fff;">11.8800 V</div><div class="t" style="right:1171px;top:1000.46px;font-size:16px;line-height:20px;color:#fff;">3.2380 V</div><div class="t" style="right:1171px;top:1018.46px;font-size:16px;line-height:20px;color:#fff;">3.2547 V</div><div class="t" style="right:1171px;top:1036.46px;font-size:16px;line-height:20px;color:#fff;">16.7 mV</div><svg class="a" style="left:632px;top:1004px" width="10" height="34"><path d="M4.5 1V13M1.5 10L4.5 14L7.5 10M4.5 20V33M1.5 23L4.5 19L7.5 23" stroke="#fff" stroke-width="1.3" fill="none"/></svg><svg class="a" style="left:631px;top:1037px" width="14" height="15"><path d="M1.2 13.3L6.5 1.3L11.8 13.3Z" fill="none" stroke="#fff" stroke-width="1.5" stroke-linejoin="miter"/></svg><div class="a" style="left:754px;top:938px;width:122px;height:118px;background:#2a4a66"></div><div class="a" style="left:754px;top:938px;width:122px;height:20px;background:#ff0000"></div><div class="t" style="left:758px;top:939.3px;font-size:15px;line-height:18px;color:#000;">C7</div><div class="tag" style="left:858px;top:939px;width:15px;height:18px;font-size:14.5px;line-height:18px;color:#ff0000">D</div><div class="tag" style="left:842px;top:939px;width:15px;height:18px;font-size:14.5px;line-height:18px;color:#ff0000">B</div><div class="tag" style="left:826px;top:939px;width:15px;height:18px;font-size:14.5px;line-height:18px;color:#ff0000">F</div><div class="t" style="right:1046px;top:958.96px;font-size:16px;line-height:20px;color:#fff;">1.00 A/div</div><div class="t" style="right:1046px;top:976.96px;font-size:16px;line-height:20px;color:#fff;">-2.49500 A</div><div class="t" style="right:1046px;top:1000.46px;font-size:16px;line-height:20px;color:#fff;">967.63 mA</div><div class="t" style="right:1046px;top:1018.46px;font-size:16px;line-height:20px;color:#fff;">3.91 mA</div><div class="t" style="right:1046px;top:1036.46px;font-size:16px;line-height:20px;color:#fff;">-963.73 mA</div><svg class="a" style="left:757px;top:1004px" width="10" height="34"><path d="M4.5 1V13M1.5 10L4.5 14L7.5 10M4.5 20V33M1.5 23L4.5 19L7.5 23" stroke="#fff" stroke-width="1.3" fill="none"/></svg><svg class="a" style="left:756px;top:1037px" width="14" height="15"><path d="M1.2 13.3L6.5 1.3L11.8 13.3Z" fill="none" stroke="#fff" stroke-width="1.5" stroke-linejoin="miter"/></svg><div class="a" style="left:753px;top:937px;width:124px;height:120px;border:2px solid #1e8ae0"></div><div class="a" style="left:879px;top:938px;width:122px;height:118px;background:#434343"></div><div class="a" style="left:879px;top:938px;width:122px;height:20px;background:#aaffff"></div><div class="t" style="left:883px;top:939.3px;font-size:15px;line-height:18px;color:#000;">M7</div><div class="t" style="right:921px;top:958.96px;font-size:16px;line-height:20px;color:#fff;">1.00 A/div</div><div class="t" style="right:921px;top:976.96px;font-size:16px;line-height:20px;color:#fff;">200 ms/div</div><div class="t" style="right:921px;top:1000.46px;font-size:16px;line-height:20px;color:#fff;">926.76 mA</div><div class="t" style="right:921px;top:1018.46px;font-size:16px;line-height:20px;color:#fff;">4.74 mA</div><div class="t" style="right:921px;top:1036.46px;font-size:16px;line-height:20px;color:#fff;">-922.01 mA</div><svg class="a" style="left:882px;top:1004px" width="10" height="34"><path d="M4.5 1V13M1.5 10L4.5 14L7.5 10M4.5 20V33M1.5 23L4.5 19L7.5 23" stroke="#fff" stroke-width="1.3" fill="none"/></svg><svg class="a" style="left:881px;top:1037px" width="14" height="15"><path d="M1.2 13.3L6.5 1.3L11.8 13.3Z" fill="none" stroke="#fff" stroke-width="1.5" stroke-linejoin="miter"/></svg><svg class="a" style="left:1004px;top:938px" width="123" height="119"><rect x="0.5" y="0.5" width="121" height="117" fill="none" stroke="#fff" stroke-width="1" stroke-dasharray="3 2"/><path d="M53 59H67M60 52V66" stroke="#fff" stroke-width="2"/></svg><div class="a" style="left:1569px;top:938px;width:72px;height:61px;background:#434343"></div><div class="a" style="left:1569px;top:938px;width:72px;height:19px;background:#00ee00"></div><div class="t" style="left:1455px;width:300px;text-align:center;top:939.13px;font-size:15.5px;line-height:19px;color:#000;">HD</div><div class="t" style="left:1455px;width:300px;text-align:center;top:968.63px;font-size:15.5px;line-height:19px;color:#fff;">12 Bits</div><div class="a" style="left:1644px;top:938px;width:141px;height:61px;background:#434343"></div><div class="a" style="left:1644px;top:938px;width:141px;height:19px;background:#f4f4f4"></div><div class="t" style="left:1647px;top:939.13px;font-size:15.5px;line-height:19px;color:#000;">Tbase</div><div class="t" style="right:137px;top:938.46px;font-size:16px;line-height:20px;color:#000;">-292 ms</div><div class="t" style="right:137px;top:958.96px;font-size:16px;line-height:20px;color:#fff;">200 ms/div</div><div class="t" style="left:1647px;top:978.96px;font-size:16px;line-height:20px;color:#fff;">50 MS</div><div class="t" style="right:137px;top:978.96px;font-size:16px;line-height:20px;color:#fff;">25 MS/s</div><div class="a" style="left:1788px;top:938px;width:122px;height:61px;background:#434343"></div><div class="a" style="left:1788px;top:938px;width:122px;height:19px;background:#f4f4f4"></div><div class="t" style="left:1791px;top:938.46px;font-size:16px;line-height:20px;color:#000;">Trigger</div><div class="tag" style="left:1854px;top:939px;width:24px;height:17px;font-size:14.5px;line-height:17px;color:#fff">C5</div><div class="tag" style="left:1881px;top:939px;width:26px;height:17px;font-size:14.5px;line-height:17px;color:#fff">DC</div><div class="t" style="left:1791px;top:958.96px;font-size:16px;line-height:20px;color:#fff;">Normal</div><div class="t" style="right:13px;top:958.96px;font-size:16px;line-height:20px;color:#fff;">2.00 V</div><div class="t" style="left:1791px;top:978.96px;font-size:16px;line-height:20px;color:#fff;">Edge</div><div class="t" style="right:11px;top:978.96px;font-size:16px;line-height:20px;color:#fff;">Positive</div><div class="t" style="left:1573px;top:1000.46px;font-size:16px;line-height:20px;color:#fff;">X1=</div><div class="t" style="right:197px;top:1000.46px;font-size:16px;line-height:20px;color:#fff;">1.29199996 s</div><div class="t" style="right:142px;top:1000.46px;font-size:16px;line-height:20px;color:#fff;">&#916;X=</div><div class="t" style="right:9px;top:1000.46px;font-size:16px;line-height:20px;color:#fff;">-1.99999996 s</div><div class="t" style="left:1573px;top:1019.96px;font-size:16px;line-height:20px;color:#fff;">X2=</div><div class="t" style="right:197px;top:1019.96px;font-size:16px;line-height:20px;color:#fff;">-708.00000 ms</div><div class="t" style="right:142px;top:1019.96px;font-size:16px;line-height:20px;color:#fff;">1/&#916;X=</div><div class="t" style="right:9px;top:1019.96px;font-size:16px;line-height:20px;color:#fff;">-500.00001 mHz</div><div class="a" style="left:0;top:1058px;width:1920px;height:1px;background:#5a5a5a"></div><div class="t" style="left:6px;top:1060.5px;font-size:18px;line-height:20px;font-weight:bold;transform:scaleX(0.88);transform-origin:0 0">TELEDYNE</div><div class="t" style="left:96px;top:1060.5px;font-size:18px;line-height:20px;transform:scaleX(0.77);transform-origin:0 0">LECROY</div><div class="a" style="left:1600px;top:1060px;width:13px;height:18px;background:#c00010"></div><div class="t" style="left:1603px;top:1060.46px;font-size:16px;line-height:20px;color:#fff;">Slow Acquisition</div><div class="t" style="right:17px;top:1061.09px;font-size:15.6px;line-height:19px;color:#fff;">9/9/2022 9:06:12 AM</div><div class="a" style="left:1648px;top:1px;width:41px;height:41px;background:#4e4e4e;border:1px solid #5a5a5a"></div><div class="a" style="left:1653px;top:10px;width:31px;height:24px;background:#000;border:1px solid #3a3a3a"></div><svg class="a" style="left:1654px;top:11px" width="30" height="23"><rect x="1" y="1" width="28" height="20" fill="#000" stroke="#14a0a0" stroke-width="1.5"/><path d="M15 2V21M2 11H28" stroke="#14a0a0" stroke-width="1.2"/><circle cx="15" cy="6" r="1.2" fill="#14a0a0"/><circle cx="8" cy="11" r="1.2" fill="#14a0a0"/><circle cx="22" cy="11" r="1.2" fill="#14a0a0"/><circle cx="15" cy="16" r="1.2" fill="#14a0a0"/></svg><div class="a" style="left:1690px;top:1px;width:78px;height:40px;background:#232323"></div><div class="a" style="left:1691px;top:39px;width:77px;height:2px;background:#8a8a8a"></div><div class="a" style="left:1690px;top:33px;width:1px;height:8px;background:#8a8a8a"></div><svg class="a" style="left:1758px;top:28px" width="10" height="10"><path d="M10 0V10H0Z" fill="#8a8a8a"/></svg><div class="t" style="left:1700px;top:11.63px;font-size:15.5px;line-height:19px;color:#fff;">Normal</div><div class="t" style="left:1812px;top:16.23px;font-size:15.2px;line-height:19px;color:#fff;">Gesture</div><div class="a" style="left:1871px;top:4px;width:41px;height:37px;background:#4a4a4a;border:1px solid #666"></div><div class="t" style="left:1741.5px;width:300px;text-align:center;top:10.86px;font-size:10.5px;line-height:13px;color:#fff;font-weight:bold;">Undo</div><svg class="a" style="left:1880px;top:22px" width="24" height="14"><path d="M4 6 Q12 0 18 5 Q20 8 20 13" stroke="#fff" stroke-width="2" fill="none"/><path d="M1 6 L7 2 L7 9Z" fill="#fff"/></svg></body></html>
